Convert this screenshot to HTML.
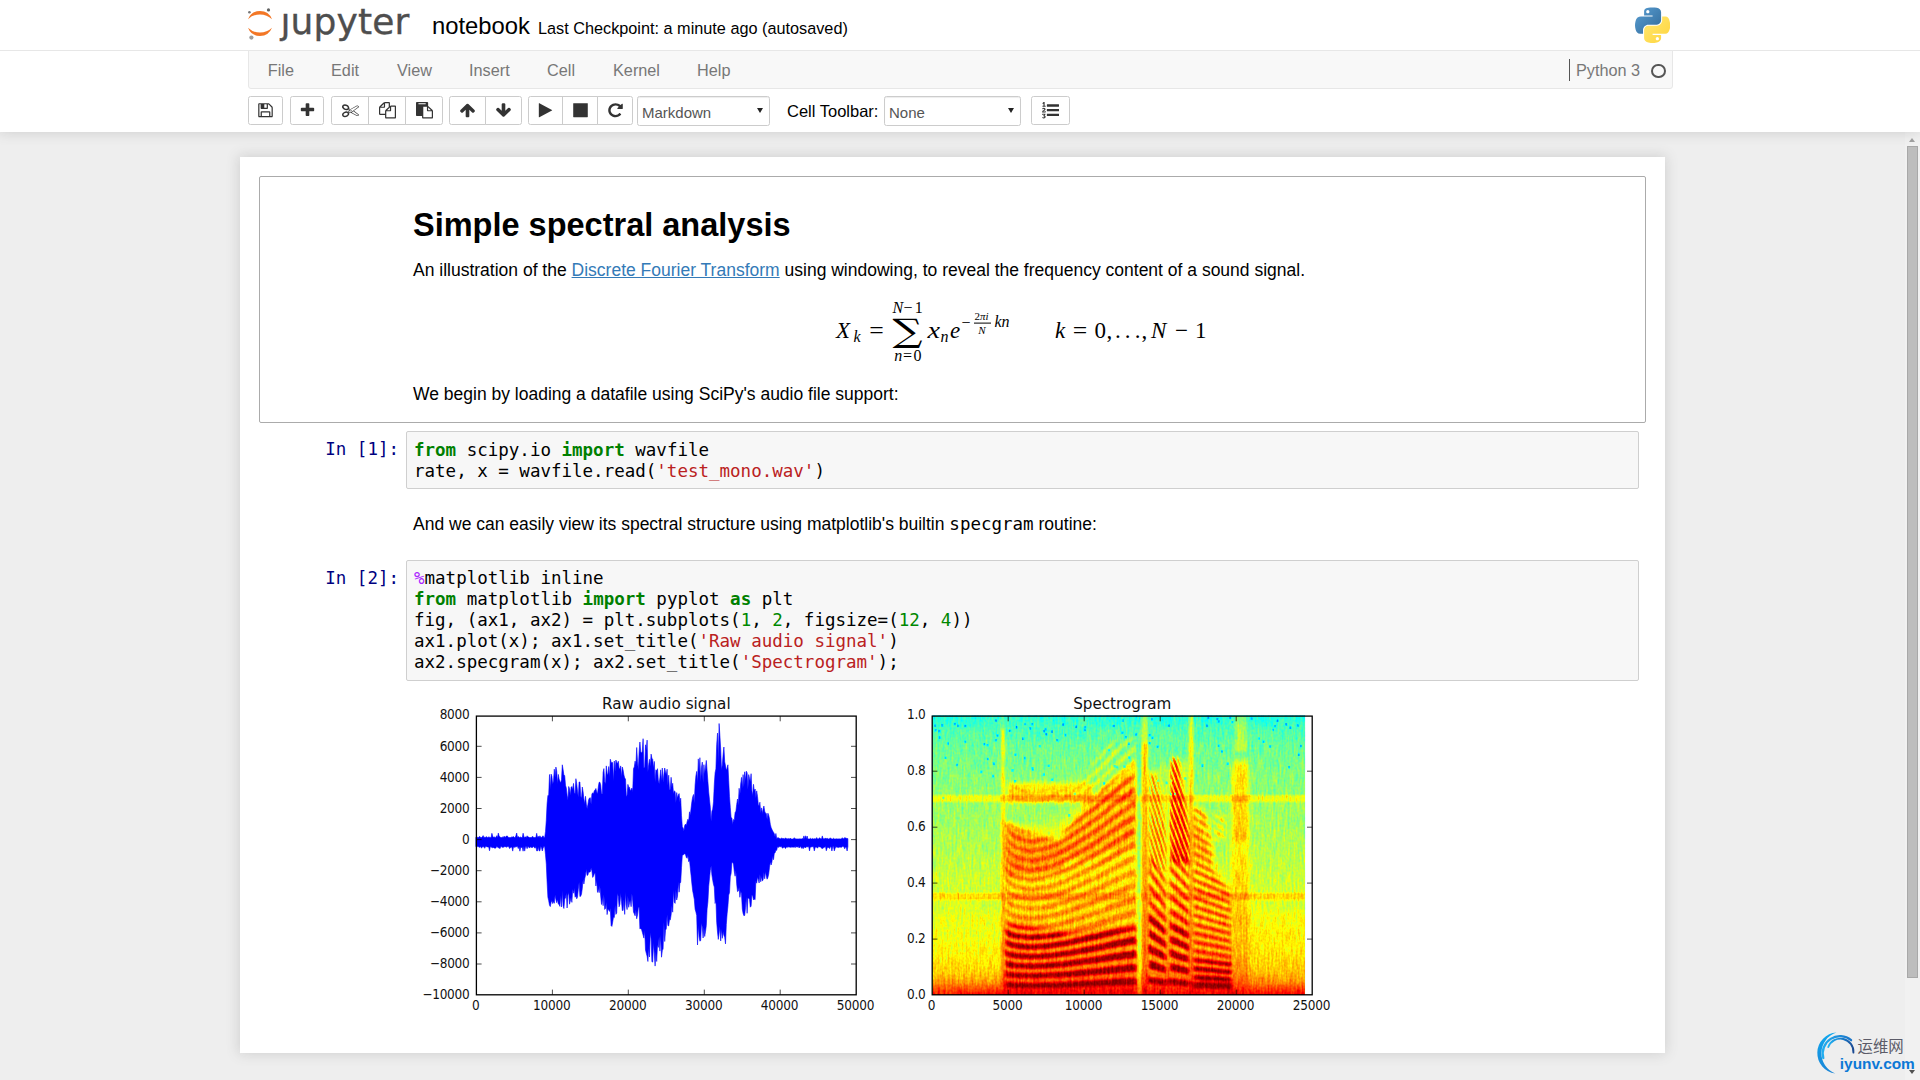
<!DOCTYPE html>
<html lang="en">
<head>
<meta charset="utf-8">
<title>notebook</title>
<style>
*{box-sizing:border-box}
html,body{margin:0;padding:0}
body{width:1920px;height:1080px;overflow:hidden;position:relative;background:#eee;font-family:"Liberation Sans",sans-serif;font-size:16.25px;color:#000}
.abs{position:absolute}
#header{position:absolute;left:0;top:0;width:1920px;height:132px;background:#fff;box-shadow:0 0 12.5px 1.25px rgba(87,87,87,.2);z-index:5}
#hline{position:absolute;left:0;top:50px;width:1920px;height:1px;background:#e7e7e7}
#menubar{position:absolute;left:248px;top:50px;width:1425px;height:38.5px;background:#f8f8f8;border:1px solid #e7e7e7;border-radius:0 0 3px 3px}
#menubar span.mi{position:absolute;top:0;line-height:38px;color:#777;font-size:16.25px;white-space:nowrap}
.tb{position:absolute;top:96px;height:29px;border:1px solid #ccc;background:#fff}
.tb svg{position:absolute;overflow:visible}
.sel{position:absolute;top:96px;height:29.5px;border:1px solid #ccc;border-radius:2.5px;background:#fff;color:#555;font-size:15px;line-height:31px;padding-left:4px;box-shadow:inset 0 1px 1px rgba(0,0,0,.075)}
.sel i{position:absolute;right:6.5px;top:11px;width:0;height:0;border-left:3.4px solid transparent;border-right:3.4px solid transparent;border-top:5.8px solid #222}
#nbname{position:absolute;left:432px;top:10px;font-size:23.8px;line-height:32px;white-space:nowrap}
#ckpt{position:absolute;left:538px;top:17px;font-size:16.25px;line-height:22px;white-space:nowrap}
#scroll{position:absolute;left:1905px;top:132px;width:15px;height:948px;background:#f1f1f1;z-index:4}
#thumb{position:absolute;left:2px;top:14px;width:11px;height:832px;background:#bdbdbd;border:1px solid #a8a8a8}
#nb{position:absolute;left:240px;top:157px;width:1425px;height:896px;background:#fff;box-shadow:0 0 12.5px 1.25px rgba(87,87,87,.2)}
#sel1{position:absolute;left:259px;top:176px;width:1387px;height:247px;border:1px solid #ababab;border-radius:2px}
.md{position:absolute;font-size:17.5px;line-height:25px;white-space:nowrap;color:#000}
.md a{color:#337ab7;text-decoration:underline}
h1.t{position:absolute;margin:0;left:413px;top:205px;font-size:32.5px;line-height:40px;font-weight:bold;white-space:nowrap}
.inp{position:absolute;left:406px;width:1233px;border:1px solid #cfcfcf;background:#f7f7f7;border-radius:2px}
pre{margin:0;font-family:"DejaVu Sans Mono","Liberation Mono",monospace;font-size:17.5px;line-height:21px;color:#000;white-space:pre}
.inp pre{position:absolute;left:7px;top:7.5px}
.prompt{position:absolute;left:259px;width:140px;text-align:right;color:#000080}
.k{color:#008000;font-weight:bold}.s{color:#ba2121}.n{color:#080}.m{color:#a2f}
code.i{font-family:"DejaVu Sans Mono","Liberation Mono",monospace;font-size:17.5px}
.math{font-family:"Liberation Serif","DejaVu Serif",serif;font-style:italic;position:absolute;white-space:nowrap;line-height:1;color:#000}
.math.r{font-style:normal}
svg text{white-space:pre}
</style>
</head>
<body>
<div id="header">
<svg class="abs" style="left:240px;top:0" width="180" height="50" viewBox="240 0 180 50">
<path fill="#f37726" d="M248 19.2A12.9 12.9 0 0 1 272 19.2A17.4 17.4 0 0 0 248 19.2Z"/>
<path fill="#f37726" d="M248 27.8A12.9 12.9 0 0 0 272 27.8A17.4 17.4 0 0 1 248 27.8Z"/>
<circle cx="249.4" cy="12.2" r="1.3" fill="#767677"/>
<circle cx="268.5" cy="9.9" r="1.6" fill="#616262"/>
<circle cx="251.4" cy="37.6" r="2.1" fill="#9e9e9e"/>
<text x="280.4" y="33.7" font-family="DejaVu Sans, Liberation Sans, sans-serif" font-size="36" letter-spacing="0.15" fill="#4e4e4e" stroke="#4e4e4e" stroke-width="0.35">jupyter</text>
<rect x="281" y="4" width="9.5" height="8.6" fill="#fff"/>
</svg>

<div id="nbname">notebook</div>
<div id="ckpt">Last Checkpoint: a minute ago (autosaved)</div>
<svg class="abs" style="left:1635.2px;top:7px" width="35.2" height="36" viewBox="0 0 111 110.5">
<defs>
<linearGradient id="pb" x1="0" y1="0" x2="1" y2="1"><stop offset="0" stop-color="#5a9fd4"/><stop offset="1" stop-color="#306998"/></linearGradient>
<linearGradient id="py" x1="1" y1="1" x2="0" y2="0"><stop offset="0" stop-color="#ffd43b"/><stop offset="1" stop-color="#ffe873"/></linearGradient>
</defs>
<path fill="url(#pb)" d="M54.92 0C50.34.02 45.96.41 42.11 1.09 30.76 3.1 28.7 7.29 28.7 15.03v10.22h26.81v3.41H18.64c-7.79 0-14.62 4.68-16.75 13.59-2.46 10.21-2.57 16.59 0 27.25 1.91 7.94 6.46 13.59 14.25 13.59h9.22v-12.25c0-8.85 7.66-16.66 16.75-16.66h26.78c7.45 0 13.41-6.14 13.41-13.63V15.03c0-7.27-6.13-12.72-13.41-13.94C64.28.33 59.5-.02 54.92 0zM40.42 8.22c2.77 0 5.03 2.3 5.03 5.12 0 2.82-2.26 5.09-5.03 5.09-2.78 0-5.03-2.28-5.03-5.09 0-2.83 2.25-5.12 5.03-5.12z"/>
<path fill="url(#py)" d="M85.64 28.66v11.91c0 9.23-7.83 17-16.75 17H42.11c-7.34 0-13.41 6.28-13.41 13.62v25.53c0 7.27 6.32 11.54 13.41 13.63 8.49 2.5 16.63 2.95 26.78 0 6.75-1.95 13.41-5.89 13.41-13.63V86.5H55.52v-3.41h40.19c7.79 0 10.7-5.44 13.41-13.59 2.8-8.4 2.68-16.48 0-27.25-1.93-7.76-5.6-13.59-13.41-13.59zM70.58 93.31c2.78 0 5.03 2.28 5.03 5.09 0 2.83-2.25 5.13-5.03 5.13-2.77 0-5.03-2.3-5.03-5.13 0-2.82 2.26-5.09 5.03-5.09z"/>
</svg>

<div id="hline"></div>
<div id="menubar">
<span class="mi" style="left:18.75px">File</span>
<span class="mi" style="left:82px">Edit</span>
<span class="mi" style="left:148px">View</span>
<span class="mi" style="left:220px">Insert</span>
<span class="mi" style="left:298px">Cell</span>
<span class="mi" style="left:364px">Kernel</span>
<span class="mi" style="left:448px">Help</span>
<div class="abs" style="left:1320px;top:8px;width:1.25px;height:22px;background:#555"></div>
<span class="mi" style="left:1327px">Python 3</span>
<div class="abs" style="left:1402px;top:12.5px;width:14.5px;height:14.5px;border:2.3px solid #555;border-radius:50%"></div>
</div>
<div class="tb" style="left:248px;width:35px;border-radius:2.5px 2.5px 2.5px 2.5px"><svg width="17" height="16.4" preserveAspectRatio="none" viewBox="0 0 1792 1792" style="left:8.00px;top:5.00px"><path fill="#333" d="M512 1536h768v-384h-768v384zm896 0h128v-896q0-14-10-38.500t-20-34.500l-281-281q-10-10-34-20t-39-10v416q0 40-28 68t-68 28h-576q-40 0-68-28t-28-68v-416h-128v1280h128v-416q0-40 28-68t68-28h832q40 0 68 28t28 68v416zm-384-928v-320q0-13-9.500-22.500t-22.500-9.500h-192q-13 0-22.500 9.500t-9.500 22.500v320q0 13 9.500 22.500t22.500 9.500h192q13 0 22.500-9.500t9.500-22.500zm640 32v928q0 40-28 68t-68 28h-1344q-40 0-68-28t-28-68v-1344q0-40 28-68t68-28h928q40 0 88 20t76 48l280 280q28 28 48 76t20 88z"/></svg></div>
<div class="tb" style="left:290px;width:34px;border-radius:2.5px 2.5px 2.5px 2.5px"><svg width="17" height="16.4" preserveAspectRatio="none" viewBox="0 0 1792 1792" style="left:7.50px;top:5.00px"><path fill="#333" d="M1600 736v192q0 40-28 68t-68 28h-416v416q0 40-28 68t-68 28h-192q-40 0-68-28t-28-68v-416h-416q-40 0-68-28t-28-68v-192q0-40 28-68t68-28h416v-416q0-40 28-68t68-28h192q40 0 68 28t28 68v416h416q40 0 68 28t28 68z"/></svg></div>
<div class="tb" style="left:331px;width:38px;border-radius:2.5px 0.0px 0.0px 2.5px"><svg width="17" height="16.4" preserveAspectRatio="none" viewBox="0 0 1792 1792" style="left:9.50px;top:5.00px"><path fill="#333" d="M960 896q26 0 45 19t19 45-19 45-45 19-45-19-19-45 19-45 45-19zm300 64l507 398q28 20 25 56-5 35-35 51l-128 64q-13 7-29 7-17 0-31-8l-690-387-110 66q-8 4-12 5 14 49 10 97-7 77-56 147.500t-132 123.500q-132 84-277 84-136 0-222-78-90-84-79-207 7-76 56-147t131-124q132-84 278-84 83 0 151 31 9-13 22-22l122-73-122-73q-13-9-22-22-68 31-151 31-146 0-278-84-82-53-131-124t-56-147q-5-59 15.500-113t63.500-93q85-79 222-79 145 0 277 84 83 52 132 123t56 148q4 48-10 97 4 1 12 5l110 66 690-387q14-8 31-8 16 0 29 7l128 64q30 16 35 51 3 36-25 56zm-681-260q46-42 21-108t-106-117q-92-59-192-59-74 0-113 36-46 42-21 108t106 117q92 59 192 59 74 0 113-36zm-85 745q81-51 106-117t-21-108q-39-36-113-36-100 0-192 59-81 51-106 117t21 108q39 36 113 36 100 0 192-59zm178-613l96 58v-11q0-36 33-56l14-8-79-47-26 26q-3 3-10 11t-12 12q-2 2-4 3.500t-3 2.500zm224 224l96 32 736-576-128-64-768 431v113l-160 96 9 8q2 2 7 6 4 4 11 12t11 12l26 26zm704 416l128-64-520-408-177 138q-2 3-13 7z"/></svg></div>
<div class="tb" style="left:368px;width:38px;border-radius:0.0px 0.0px 0.0px 0.0px"><svg width="17" height="16.4" preserveAspectRatio="none" viewBox="0 0 1792 1792" style="left:9.50px;top:5.00px"><path fill="#333" d="M1696 384q40 0 68 28t28 68v1216q0 40-28 68t-68 28h-960q-40 0-68-28t-28-68v-288h-544q-40 0-68-28t-28-68v-672q0-40 20-88t48-76l408-408q28-28 76-48t88-20h416q40 0 68 28t28 68v328q68-40 128-40h416zm-544 213l-299 299h299v-299zm-640-384l-299 299h299v-299zm196 647l316-316v-416h-384v416q0 40-28 68t-68 28h-416v640h512v-256q0-40 20-88t48-76zm956 804v-1152h-384v416q0 40-28 68t-68 28h-416v640h896z"/></svg></div>
<div class="tb" style="left:405px;width:38px;border-radius:0.0px 2.5px 2.5px 0.0px"><svg width="17" height="16.4" preserveAspectRatio="none" viewBox="0 0 1792 1792" style="left:9.50px;top:5.00px"><path fill="#333" d="M768 1664h896v-640h-416q-40 0-68-28t-28-68v-416h-384v1152zm256-1440v-64q0-13-9.500-22.500t-22.500-9.500h-704q-13 0-22.500 9.500t-9.500 22.500v64q0 13 9.500 22.500t22.500 9.500h704q13 0 22.500-9.500t9.500-22.500zm256 672h299l-299-299v299zm512 128v672q0 40-28 68t-68 28h-960q-40 0-68-28t-28-68v-160h-544q-40 0-68-28t-28-68v-1344q0-40 28-68t68-28h1088q40 0 68 28t28 68v328q21 13 36 28l408 408q28 28 48 76t20 88z"/></svg></div>
<div class="tb" style="left:449px;width:37px;border-radius:2.5px 0.0px 0.0px 2.5px"><svg width="17" height="16.4" preserveAspectRatio="none" viewBox="0 0 1792 1792" style="left:9.00px;top:5.00px"><path fill="#333" d="M1675 971q0 51-37 90l-75 75q-38 38-91 38-54 0-90-38l-294-293v704q0 52-37.500 84.500t-90.500 32.500h-128q-53 0-90.500-32.500t-37.500-84.500v-704l-294 293q-36 38-90 38t-90-38l-75-75q-38-38-38-90 0-53 38-91l651-651q35-37 90-37 54 0 91 37l651 651q37 39 37 91z"/></svg></div>
<div class="tb" style="left:485px;width:37px;border-radius:0.0px 2.5px 2.5px 0.0px"><svg width="17" height="16.4" preserveAspectRatio="none" viewBox="0 0 1792 1792" style="left:9.00px;top:5.00px"><path fill="#333" d="M1675 832q0 53-37 90l-651 652q-39 37-91 37-53 0-90-37l-651-652q-38-36-38-90 0-53 38-91l74-75q39-37 91-37 53 0 90 37l294 294v-704q0-52 38-90t90-38h128q52 0 90 38t38 90v704l294-294q37-37 90-37 52 0 91 37l75 75q37 39 37 91z"/></svg></div>
<div class="tb" style="left:528px;width:35px;border-radius:2.5px 0.0px 0.0px 2.5px"><svg width="17" height="16.4" preserveAspectRatio="none" viewBox="0 0 1792 1792" style="left:8.00px;top:5.00px"><path fill="#333" d="M1576 927l-1328 738q-23 13-39.500 3t-16.500-36v-1472q0-26 16.500-36t39.500 3l1328 738q23 13 23 31t-23 31z"/></svg></div>
<div class="tb" style="left:562px;width:36px;border-radius:0.0px 0.0px 0.0px 0.0px"><svg width="17" height="16.4" preserveAspectRatio="none" viewBox="0 0 1792 1792" style="left:8.50px;top:5.00px"><path fill="#333" d="M1664 192v1408q0 26-19 45t-45 19h-1408q-26 0-45-19t-19-45v-1408q0-26 19-45t45-19h1408q26 0 45 19t19 45z"/></svg></div>
<div class="tb" style="left:597px;width:36px;border-radius:0.0px 2.5px 2.5px 0.0px"><svg width="17" height="16.4" preserveAspectRatio="none" viewBox="0 0 1792 1792" style="left:8.50px;top:5.00px"><path fill="#333" d="M1664 256v448q0 26-19 45t-45 19h-448q-42 0-59-40-17-39 14-69l138-138q-148-137-349-137-104 0-198.500 40.500t-163.500 109.500-109.500 163.500-40.500 198.500 40.500 198.500 109.500 163.500 163.500 109.500 198.500 40.500q119 0 225-52t179-147q7-10 23-12 14 0 25 9l137 138q9 8 9.500 20.500t-7.500 22.500q-109 132-264 204.500t-327 72.500q-156 0-298-61t-245-164-164-245-61-298 61-298 164-245 245-164 298-61q147 0 284.500 55.500t244.500 156.500l130-129q29-31 70-14 39 17 39 59z"/></svg></div>
<div class="tb" style="left:1031px;width:39px;border-radius:2.5px 2.5px 2.5px 2.5px"><svg width="17" height="16.4" preserveAspectRatio="none" viewBox="0 0 1792 1792" style="left:10.00px;top:5.00px"><path fill="#333" d="M381 1620q0 80-54.500 126t-135.500 46q-106 0-172-66l57-88q49 45 106 45 29 0 50.500-14.500t21.500-42.500q0-64-105-56l-26-56q8-10 32.500-43.500t42.500-54 37-38.500v-1q-16 0-48.500 1t-48.500 1v53h-106v-152h333v88l-95 115q51 12 81 49t30 88zm2-627v159h-362q-6-36-6-54 0-51 23.500-93t56.500-68 66-47.500 56.500-43.500 23.500-45q0-25-14.500-38.500t-39.500-13.500q-46 0-81 58l-85-59q24-51 71.500-79.500t105.500-28.500q73 0 123 41.500t50 112.500q0 50-34 91.500t-75 64.500-75.500 50.500-35.500 52.500h127v-60h105zm1409 319v192q0 13-9.500 22.500t-22.500 9.500h-1216q-13 0-22.500-9.500t-9.500-22.500v-192q0-14 9-23t23-9h1216q13 0 22.500 9.500t9.500 22.500zm-1408-899v99h-335v-99h107q0-41 .5-121.500t.5-121.500v-12h-2q-8 17-50 54l-71-76 136-127h106v404h108zm1408 387v192q0 13-9.500 22.500t-22.500 9.500h-1216q-13 0-22.500-9.500t-9.500-22.500v-192q0-14 9-23t23-9h1216q13 0 22.500 9.500t9.500 22.500zm0-512v192q0 13-9.500 22.500t-22.500 9.500h-1216q-13 0-22.500-9.500t-9.500-22.500v-192q0-13 9.500-22.500t22.500-9.500h1216q13 0 22.500 9.500t9.500 22.500z"/></svg></div>

<div class="sel" style="left:637px;width:133px">Markdown<i></i></div>
<div class="abs" style="left:787px;top:99.4px;font-size:16.5px;line-height:24px;white-space:nowrap">Cell Toolbar:</div>
<div class="sel" style="left:884px;width:137px">None<i></i></div>
</div>
<div id="scroll">
<div class="abs" style="left:4px;top:6px;width:0;height:0;border-left:3.5px solid transparent;border-right:3.5px solid transparent;border-bottom:4px solid #a0a0a0"></div>
<div id="thumb"></div>
<div class="abs" style="left:4px;top:938px;width:0;height:0;border-left:3.5px solid transparent;border-right:3.5px solid transparent;border-top:4px solid #505050"></div>
</div>
<div id="nb"></div>
<div id="sel1"></div>
<h1 class="t">Simple spectral analysis</h1>
<div class="md" style="left:413px;top:258px">An illustration of the <a>Discrete Fourier Transform</a> using windowing, to reveal the frequency content of a sound signal.</div>
<svg class="abs" style="left:820px;top:290px" width="410" height="85" viewBox="820 290 410 85" font-family="Liberation Serif, DejaVu Serif, serif" fill="#000">
<g font-style="italic" font-size="23">
<text x="836" y="338">X</text>
<text x="927.5" y="338" textLength="12.5" lengthAdjust="spacingAndGlyphs">x</text>
<text x="950" y="338">e</text>
<text x="1055" y="338">k</text>
<text x="1151" y="338">N</text>
</g>
<g font-style="italic" font-size="16">
<text x="853.5" y="341.5">k</text>
<text x="940.5" y="341.8">n</text>
<text x="892.5" y="312.6">N</text>
<text x="894.3" y="360.5">n</text>
<text x="994.5" y="327.4">kn</text>
</g>
<g font-size="16">
<text x="903.5" y="312.6">−</text>
<text x="914.8" y="312.6">1</text>
<text x="903" y="360.5">=</text>
<text x="913.6" y="360.5">0</text>
<text x="961.5" y="327.8">−</text>
</g>
<g font-size="11">
<text x="974.6" y="320">2</text>
<text x="980" y="320" font-style="italic">πi</text>
<text x="978.2" y="333.8" font-style="italic">N</text>
</g>
<rect x="974" y="322.6" width="17" height="1" />
<text x="892.6" y="342.3" font-size="32.4" font-family="DejaVu Serif, Liberation Serif, serif" textLength="30" lengthAdjust="spacingAndGlyphs">∑</text>
<g font-size="23">
<text x="869.3" y="338" textLength="14.5" lengthAdjust="spacingAndGlyphs">=</text>
<text x="1072.8" y="338" textLength="14.5" lengthAdjust="spacingAndGlyphs">=</text>
<text x="1094.5" y="338">0</text>
<text x="1106.5" y="338">,</text>
<text x="1115" y="338" letter-spacing="4.1">...</text>
<text x="1141.5" y="338">,</text>
<text x="1175" y="338">−</text>
<text x="1195" y="338">1</text>
</g>
</svg>

<div class="md" style="left:413px;top:382px">We begin by loading a datafile using SciPy's audio file support:</div>

<pre class="prompt" style="top:439px">In [1]:</pre>
<div class="inp" style="top:431px;height:58px"><pre><span class="k">from</span> scipy.io <span class="k">import</span> wavfile
rate, x = wavfile.read(<span class="s">'test_mono.wav'</span>)</pre></div>

<div class="md" style="left:413px;top:512px">And we can easily view its spectral structure using matplotlib's builtin <code class="i">specgram</code> routine:</div>

<pre class="prompt" style="top:568px">In [2]:</pre>
<div class="inp" style="top:560px;height:121px"><pre style="top:6.6px"><span class="m">%</span>matplotlib inline
<span class="k">from</span> matplotlib <span class="k">import</span> pyplot <span class="k">as</span> plt
fig, (ax1, ax2) = plt.subplots(<span class="n">1</span>, <span class="n">2</span>, figsize=(<span class="n">12</span>, <span class="n">4</span>))
ax1.plot(x); ax1.set_title(<span class="s">'Raw audio signal'</span>)
ax2.specgram(x); ax2.set_title(<span class="s">'Spectrogram'</span>);</pre></div>
<svg class="abs" style="left:410px;top:688px" width="950" height="335" viewBox="410 688 950 335" font-family="DejaVu Sans, Liberation Sans, sans-serif" font-size="12.5" fill="#111">
<path fill="#0000ff" stroke="#0000ff" stroke-width="0.6" stroke-linejoin="round" d="M475.9 837.6L476.7 836.4L477.5 837.6L478.3 837.6L479.1 836.7L479.9 836.5L480.7 837.6L481.5 837.6L482.3 837.1L483.1 835.6L483.9 837.6L484.7 837.2L485.5 837.6L486.3 836.5L487.1 837.4L487.9 837.5L488.7 836.9L489.5 837.2L490.3 837.6L491.1 837.4L491.9 833.3L492.7 836.3L493.5 837.3L494.3 836.9L495.1 837.6L495.9 837.4L496.7 835.7L497.5 837.6L498.3 833.1L499.1 836.0L499.9 836.8L500.7 837.5L501.5 837.6L502.3 837.6L503.1 836.5L503.9 837.4L504.7 836.3L505.5 837.6L506.3 836.1L507.1 835.9L507.9 836.6L508.7 837.6L509.5 837.6L510.3 837.6L511.1 837.6L511.9 836.6L512.7 837.3L513.5 836.5L514.3 837.6L515.1 837.5L515.9 835.7L516.7 833.0L517.5 837.6L518.3 836.4L519.1 837.2L519.9 837.6L520.7 837.0L521.5 837.6L522.3 837.5L523.1 833.2L523.9 836.5L524.7 837.6L525.5 836.8L526.3 837.6L527.1 835.8L527.9 837.1L528.7 837.0L529.5 837.6L530.3 837.6L531.1 837.2L531.9 837.5L532.7 836.2L533.5 837.6L534.3 837.5L535.1 837.6L535.9 837.3L536.7 833.3L537.5 837.6L538.3 836.3L539.1 837.6L539.9 835.8L540.7 837.3L541.5 837.6L542.3 836.4L543.1 835.8L543.9 837.6L544.7 837.6L545.5 831.4L546.3 820.2L547.1 803.6L547.9 795.4L548.7 795.5L549.5 774.5L550.3 789.3L551.1 774.1L551.9 776.4L552.7 784.3L553.5 780.9L554.3 769.2L555.1 777.5L555.9 767.0L556.7 770.9L557.5 783.7L558.3 774.4L559.1 779.1L559.9 781.3L560.7 783.1L561.5 779.6L562.3 764.8L563.1 769.6L563.9 775.2L564.7 775.6L565.5 785.3L566.3 788.1L567.1 795.2L567.9 799.9L568.7 786.5L569.5 788.7L570.3 795.5L571.1 787.3L571.9 786.5L572.7 790.0L573.5 783.4L574.3 792.6L575.1 793.7L575.9 778.7L576.7 783.7L577.5 791.1L578.3 797.6L579.1 782.0L579.9 782.0L580.7 796.0L581.5 798.3L582.3 787.0L583.1 791.8L583.9 799.0L584.7 803.9L585.5 796.3L586.3 804.1L587.1 808.8L587.9 804.4L588.7 799.6L589.5 798.0L590.3 797.7L591.1 804.4L591.9 794.0L592.7 792.8L593.5 793.7L594.3 790.7L595.1 790.0L595.9 788.5L596.7 792.0L597.5 793.9L598.3 787.0L599.1 782.3L599.9 782.2L600.7 784.9L601.5 793.8L602.3 794.0L603.1 772.4L603.9 768.6L604.7 781.8L605.5 783.7L606.3 765.9L607.1 773.2L607.9 775.3L608.7 766.5L609.5 777.3L610.3 759.2L611.1 762.0L611.9 763.1L612.7 762.4L613.5 781.6L614.3 761.0L615.1 771.5L615.9 760.0L616.7 762.6L617.5 763.6L618.3 761.2L619.1 768.0L619.9 769.3L620.7 765.9L621.5 777.3L622.3 767.0L623.1 770.1L623.9 774.9L624.7 778.1L625.5 779.0L626.3 796.5L627.1 795.3L627.9 784.4L628.7 787.6L629.5 787.2L630.3 790.7L631.1 789.7L631.9 788.1L632.7 791.7L633.5 768.6L634.3 766.9L635.1 761.1L635.9 765.1L636.7 747.5L637.5 761.5L638.3 769.9L639.1 752.4L639.9 742.0L640.7 751.6L641.5 753.2L642.3 751.2L643.1 738.7L643.9 767.9L644.7 767.1L645.5 744.8L646.3 750.5L647.1 740.1L647.9 771.7L648.7 764.7L649.5 759.3L650.3 766.4L651.1 754.1L651.9 758.3L652.7 759.2L653.5 768.2L654.3 761.4L655.1 782.1L655.9 769.8L656.7 771.1L657.5 768.7L658.3 780.1L659.1 784.0L659.9 777.7L660.7 769.8L661.5 781.7L662.3 768.0L663.1 782.5L663.9 774.2L664.7 768.0L665.5 771.7L666.3 774.9L667.1 769.2L667.9 785.2L668.7 775.2L669.5 789.7L670.3 789.2L671.1 777.3L671.9 787.2L672.7 783.3L673.5 793.7L674.3 790.9L675.1 791.5L675.9 802.8L676.7 792.6L677.5 798.1L678.3 795.2L679.1 793.6L679.9 801.9L680.7 798.2L681.5 815.7L682.3 826.8L683.1 827.9L683.9 831.0L684.7 825.5L685.5 824.1L686.3 825.6L687.1 821.7L687.9 819.2L688.7 820.9L689.5 811.8L690.3 815.3L691.1 808.1L691.9 801.4L692.7 796.9L693.5 794.5L694.3 803.5L695.1 784.9L695.9 776.0L696.7 771.4L697.5 782.9L698.3 758.9L699.1 771.4L699.9 757.7L700.7 782.0L701.5 767.4L702.3 762.1L703.1 782.9L703.9 764.7L704.7 774.1L705.5 767.2L706.3 760.4L707.1 770.9L707.9 781.5L708.7 792.0L709.5 799.8L710.3 807.2L711.1 821.4L711.9 811.3L712.7 809.2L713.5 801.8L714.3 784.2L715.1 772.7L715.9 768.9L716.7 744.8L717.5 733.1L718.3 762.4L719.1 723.5L719.9 735.6L720.7 749.3L721.5 769.7L722.3 765.1L723.1 754.8L723.9 747.0L724.7 761.8L725.5 765.8L726.3 770.3L727.1 768.2L727.9 764.8L728.7 780.5L729.5 796.6L730.3 807.6L731.1 817.6L731.9 818.0L732.7 824.4L733.5 819.5L734.3 820.2L735.1 812.5L735.9 811.2L736.7 804.4L737.5 799.0L738.3 805.5L739.1 788.3L739.9 795.4L740.7 784.0L741.5 777.4L742.3 788.5L743.1 774.6L743.9 787.3L744.7 771.8L745.5 780.7L746.3 771.2L747.1 772.7L747.9 789.5L748.7 774.6L749.5 778.5L750.3 781.8L751.1 773.7L751.9 790.7L752.7 795.9L753.5 784.3L754.3 791.1L755.1 789.0L755.9 798.0L756.7 790.9L757.5 796.4L758.3 804.4L759.1 805.9L759.9 802.2L760.7 812.9L761.5 807.9L762.3 813.7L763.1 808.9L763.9 806.0L764.7 811.2L765.5 813.3L766.3 813.4L767.1 819.4L767.9 813.2L768.7 815.2L769.5 818.8L770.3 824.3L771.1 827.4L771.9 829.3L772.7 831.1L773.5 832.2L774.3 833.8L775.1 837.1L775.9 833.5L776.7 838.4L777.5 837.9L778.3 837.6L779.1 838.6L779.9 838.4L780.7 839.0L781.5 837.9L782.3 838.4L783.1 838.6L783.9 838.6L784.7 839.0L785.5 837.8L786.3 838.7L787.1 838.6L787.9 839.0L788.7 838.5L789.5 838.9L790.3 838.1L791.1 839.0L791.9 839.0L792.7 839.0L793.5 838.8L794.3 837.7L795.1 839.0L795.9 838.7L796.7 839.0L797.5 838.9L798.3 838.9L799.1 839.0L799.9 838.8L800.7 838.9L801.5 838.9L802.3 838.5L803.1 838.9L803.9 835.9L804.7 838.9L805.5 835.8L806.3 839.0L807.1 836.0L807.9 839.0L808.7 839.0L809.5 839.0L810.3 838.3L811.1 838.9L811.9 838.9L812.7 838.4L813.5 839.0L814.3 838.7L815.1 838.8L815.9 839.0L816.7 837.6L817.5 838.9L818.3 838.9L819.1 838.3L819.9 837.8L820.7 838.9L821.5 839.0L822.3 835.9L823.1 838.8L823.9 838.7L824.7 838.8L825.5 837.9L826.3 838.8L827.1 838.2L827.9 838.7L828.7 839.0L829.5 838.7L830.3 837.8L831.1 838.7L831.9 838.9L832.7 839.0L833.5 838.3L834.3 838.9L835.1 838.9L835.9 838.9L836.7 838.8L837.5 838.9L838.3 838.9L839.1 838.8L839.9 839.0L840.7 838.9L841.5 838.8L842.3 837.7L843.1 838.8L843.9 838.7L844.7 837.6L845.5 838.0L846.3 838.3L847.1 838.5L847.9 838.6L847.9 846.6L847.1 851.0L846.3 847.2L845.5 846.9L844.7 848.8L843.9 846.7L843.1 846.6L842.3 846.6L841.5 847.3L840.7 847.2L839.9 847.1L839.1 847.3L838.3 847.6L837.5 847.3L836.7 847.2L835.9 846.6L835.1 848.4L834.3 850.9L833.5 846.6L832.7 846.7L831.9 851.0L831.1 847.1L830.3 846.7L829.5 848.6L828.7 847.8L827.9 847.0L827.1 848.3L826.3 850.8L825.5 846.6L824.7 847.0L823.9 847.5L823.1 848.3L822.3 848.5L821.5 848.2L820.7 846.9L819.9 846.9L819.1 846.7L818.3 846.8L817.5 848.2L816.7 847.2L815.9 846.9L815.1 847.7L814.3 850.9L813.5 846.7L812.7 846.7L811.9 846.8L811.1 847.0L810.3 847.0L809.5 850.9L808.7 846.7L807.9 846.8L807.1 846.9L806.3 846.8L805.5 847.9L804.7 847.0L803.9 847.5L803.1 848.7L802.3 847.6L801.5 848.3L800.7 846.6L799.9 847.1L799.1 848.0L798.3 846.6L797.5 847.0L796.7 846.9L795.9 846.6L795.1 847.7L794.3 846.7L793.5 847.2L792.7 847.0L791.9 847.4L791.1 846.7L790.3 847.4L789.5 847.1L788.7 846.8L787.9 847.5L787.1 846.8L786.3 847.2L785.5 848.6L784.7 847.6L783.9 846.7L783.1 848.1L782.3 848.1L781.5 846.6L780.7 846.7L779.9 846.8L779.1 846.6L778.3 847.5L777.5 846.7L776.7 850.3L775.9 850.3L775.1 852.8L774.3 853.2L773.5 859.7L772.7 856.3L771.9 862.2L771.1 865.0L770.3 861.7L769.5 867.3L768.7 874.1L767.9 877.4L767.1 879.2L766.3 876.3L765.5 871.4L764.7 878.8L763.9 872.3L763.1 879.7L762.3 881.1L761.5 876.6L760.7 881.8L759.9 874.2L759.1 883.0L758.3 879.2L757.5 877.3L756.7 883.2L755.9 880.7L755.1 899.7L754.3 899.0L753.5 899.9L752.7 896.1L751.9 894.7L751.1 906.2L750.3 907.2L749.5 899.3L748.7 898.2L747.9 897.8L747.1 913.3L746.3 896.8L745.5 907.6L744.7 915.4L743.9 915.7L743.1 913.4L742.3 909.0L741.5 893.8L740.7 890.9L739.9 897.3L739.1 887.4L738.3 891.1L737.5 891.6L736.7 883.9L735.9 870.6L735.1 876.2L734.3 871.7L733.5 864.0L732.7 862.4L731.9 862.4L731.1 873.4L730.3 876.8L729.5 892.7L728.7 895.1L727.9 906.4L727.1 913.9L726.3 924.4L725.5 943.9L724.7 937.3L723.9 935.3L723.1 931.4L722.3 938.3L721.5 928.7L720.7 941.0L719.9 926.7L719.1 933.3L718.3 939.4L717.5 932.0L716.7 922.2L715.9 899.3L715.1 903.5L714.3 887.0L713.5 884.5L712.7 880.1L711.9 875.0L711.1 865.7L710.3 870.6L709.5 878.1L708.7 886.4L707.9 902.1L707.1 908.9L706.3 925.6L705.5 931.5L704.7 936.5L703.9 927.5L703.1 938.0L702.3 927.2L701.5 922.7L700.7 940.5L699.9 941.2L699.1 936.7L698.3 925.4L697.5 945.0L696.7 915.5L695.9 911.9L695.1 909.2L694.3 899.4L693.5 895.1L692.7 890.9L691.9 883.9L691.1 875.7L690.3 868.2L689.5 859.9L688.7 861.7L687.9 855.2L687.1 858.3L686.3 857.4L685.5 854.5L684.7 853.8L683.9 854.6L683.1 854.8L682.3 855.4L681.5 867.6L680.7 882.4L679.9 882.9L679.1 892.2L678.3 881.4L677.5 896.2L676.7 900.0L675.9 890.1L675.1 903.4L674.3 901.9L673.5 890.0L672.7 912.2L671.9 906.1L671.1 915.1L670.3 919.9L669.5 919.6L668.7 925.9L667.9 925.6L667.1 914.8L666.3 928.7L665.5 930.3L664.7 941.5L663.9 922.1L663.1 948.8L662.3 950.6L661.5 957.2L660.7 934.8L659.9 951.1L659.1 936.8L658.3 947.4L657.5 944.7L656.7 961.5L655.9 951.9L655.1 966.1L654.3 953.9L653.5 942.3L652.7 962.1L651.9 961.7L651.1 938.8L650.3 932.6L649.5 957.0L648.7 948.2L647.9 961.5L647.1 956.2L646.3 953.3L645.5 950.0L644.7 930.5L643.9 938.1L643.1 935.1L642.3 932.2L641.5 929.2L640.7 928.6L639.9 928.9L639.1 907.2L638.3 907.8L637.5 914.9L636.7 918.8L635.9 910.1L635.1 915.8L634.3 913.8L633.5 912.1L632.7 901.0L631.9 893.6L631.1 906.7L630.3 899.9L629.5 902.8L628.7 907.3L627.9 896.0L627.1 909.6L626.3 905.0L625.5 892.1L624.7 914.4L623.9 899.7L623.1 910.4L622.3 910.5L621.5 901.5L620.7 893.2L619.9 904.2L619.1 906.8L618.3 896.5L617.5 893.2L616.7 912.8L615.9 914.4L615.1 904.9L614.3 917.6L613.5 916.9L612.7 922.0L611.9 926.4L611.1 925.6L610.3 908.2L609.5 911.4L608.7 909.9L607.9 908.7L607.1 914.6L606.3 902.3L605.5 908.4L604.7 909.4L603.9 894.5L603.1 905.7L602.3 897.2L601.5 904.5L600.7 896.0L599.9 885.7L599.1 892.7L598.3 888.2L597.5 892.4L596.7 880.0L595.9 886.0L595.1 872.9L594.3 873.7L593.5 876.0L592.7 877.4L591.9 870.9L591.1 868.1L590.3 871.8L589.5 872.2L588.7 871.7L587.9 875.0L587.1 875.5L586.3 869.3L585.5 875.3L584.7 878.7L583.9 884.0L583.1 879.2L582.3 888.2L581.5 894.1L580.7 896.2L579.9 896.5L579.1 882.2L578.3 889.2L577.5 897.1L576.7 898.8L575.9 895.4L575.1 897.2L574.3 888.3L573.5 893.2L572.7 888.9L571.9 902.4L571.1 897.2L570.3 901.2L569.5 904.2L568.7 892.4L567.9 895.3L567.1 908.0L566.3 893.1L565.5 898.0L564.7 898.9L563.9 908.5L563.1 905.8L562.3 890.8L561.5 906.9L560.7 895.6L559.9 906.4L559.1 904.2L558.3 904.1L557.5 899.4L556.7 902.7L555.9 899.5L555.1 895.0L554.3 903.3L553.5 901.4L552.7 903.6L551.9 900.4L551.1 902.5L550.3 906.6L549.5 905.3L548.7 900.7L547.9 897.2L547.1 882.2L546.3 864.1L545.5 854.7L544.7 846.8L543.9 846.6L543.1 848.1L542.3 851.0L541.5 847.7L540.7 846.6L539.9 850.8L539.1 850.9L538.3 846.7L537.5 850.9L536.7 850.9L535.9 846.6L535.1 848.2L534.3 847.5L533.5 846.6L532.7 847.5L531.9 847.3L531.1 847.6L530.3 846.7L529.5 848.1L528.7 846.9L527.9 846.6L527.1 848.7L526.3 846.6L525.5 846.7L524.7 851.1L523.9 846.6L523.1 851.2L522.3 847.4L521.5 847.4L520.7 847.4L519.9 851.2L519.1 846.7L518.3 848.6L517.5 846.6L516.7 846.6L515.9 847.2L515.1 846.6L514.3 847.5L513.5 846.7L512.7 851.1L511.9 847.0L511.1 847.3L510.3 847.8L509.5 848.5L508.7 846.6L507.9 846.7L507.1 846.6L506.3 847.3L505.5 846.7L504.7 846.6L503.9 847.4L503.1 846.7L502.3 847.6L501.5 846.6L500.7 846.8L499.9 848.7L499.1 847.8L498.3 847.8L497.5 847.0L496.7 846.6L495.9 847.9L495.1 848.3L494.3 848.0L493.5 847.4L492.7 848.0L491.9 846.8L491.1 847.4L490.3 846.6L489.5 850.8L488.7 847.0L487.9 846.9L487.1 846.9L486.3 846.6L485.5 846.6L484.7 848.3L483.9 846.6L483.1 847.0L482.3 846.8L481.5 848.2L480.7 846.6L479.9 847.2L479.1 847.2L478.3 846.6L477.5 846.6L476.7 846.6L475.9 846.6Z"/>
<defs>
<filter id="jet" filterUnits="userSpaceOnUse" x="932.2" y="715.2" width="373.0" height="279.9" color-interpolation-filters="sRGB">
<feTurbulence type="fractalNoise" baseFrequency="0.5 0.07" numOctaves="2" seed="11" result="n"/>
<feColorMatrix in="n" type="matrix" values="1 0 0 0 0 1 0 0 0 0 1 0 0 0 0 0 0 0 0 1" result="ng"/>
<feTurbulence type="fractalNoise" baseFrequency="0.5 0.4" numOctaves="1" seed="3" result="m"/>
<feColorMatrix in="m" type="matrix" values="0 1 0 0 0 0 1 0 0 0 0 1 0 0 0 0 0 0 0 1" result="mg"/>
<feComposite in="ng" in2="mg" operator="arithmetic" k1="0" k2="0.6" k3="0.4" k4="0" result="nn"/>
<feComposite in="SourceGraphic" in2="nn" operator="arithmetic" k1="0" k2="1" k3="0.24" k4="-0.12" result="s"/>
<feComponentTransfer in="s">
<feFuncR type="table" tableValues="0 0 0 0 .5 1 1 1 .5"/>
<feFuncG type="table" tableValues="0 0 .5 1 1 1 .5 0 0"/>
<feFuncB type="table" tableValues=".5 1 1 1 .5 0 0 0 0"/>
</feComponentTransfer>
</filter>
<filter id="b4" x="-20%" y="-20%" width="140%" height="140%"><feGaussianBlur stdDeviation="4"/></filter>
<filter id="b2" x="-20%" y="-20%" width="140%" height="140%"><feGaussianBlur stdDeviation="2"/></filter>
<filter id="b05" x="-5%" y="-5%" width="110%" height="110%"><feGaussianBlur stdDeviation="0.6"/></filter>
<filter id="b1" x="-5%" y="-5%" width="110%" height="110%"><feGaussianBlur stdDeviation="1.25"/></filter>
<linearGradient id="sb" gradientUnits="userSpaceOnUse" x1="0" y1="995.1" x2="0" y2="715.2"><stop offset="0" stop-color="#dedede"/><stop offset="0.02" stop-color="#cfcfcf"/><stop offset="0.045" stop-color="#bababa"/><stop offset="0.08" stop-color="#ababab"/><stop offset="0.14" stop-color="#a2a2a2"/><stop offset="0.2" stop-color="#9d9d9d"/><stop offset="0.3" stop-color="#989898"/><stop offset="0.335" stop-color="#969696"/><stop offset="0.345" stop-color="#a8a8a8"/><stop offset="0.36" stop-color="#a8a8a8"/><stop offset="0.37" stop-color="#949494"/><stop offset="0.4" stop-color="#939393"/><stop offset="0.5" stop-color="#8e8e8e"/><stop offset="0.6" stop-color="#898989"/><stop offset="0.685" stop-color="#868686"/><stop offset="0.695" stop-color="#9c9c9c"/><stop offset="0.71" stop-color="#9c9c9c"/><stop offset="0.72" stop-color="#838383"/><stop offset="0.8" stop-color="#808080"/><stop offset="0.9" stop-color="#797979"/><stop offset="0.96" stop-color="#717171"/><stop offset="1.0" stop-color="#676767"/></linearGradient>
<clipPath id="sc"><rect x="932.2" y="715.2" width="373.0" height="279.9"/></clipPath>
<mask id="sm" maskUnits="userSpaceOnUse" x="932.2" y="715.2" width="373.0" height="279.9"><g filter="url(#b2)"><path fill="#e6e6e6"  d="M1004.4 995.1L1004.4 919.5L1023.4 925.1L1069.0 932.1L1107.0 929.3L1136.6 925.1L1137.4 995.1 Z"/><path fill="#4a4a4a"  d="M1004.4 925.1L1004.4 877.5L1046.2 883.1L1076.6 866.3L1136.6 855.2L1136.6 927.9L1069.0 934.9L1023.4 927.9 Z"/><path fill="#5c5c5c"  d="M1004.4 883.1L1004.4 818.8L1017.3 830.0L1038.6 835.6L1062.9 841.2L1062.9 871.9L1038.6 883.1 Z"/><path fill="#6b6b6b"  d="M1056.8 871.9L1062.9 832.8L1084.2 810.4L1107.0 785.2L1129.8 765.6L1136.6 765.6L1136.6 855.2L1099.4 863.5L1076.6 871.9 Z"/><path fill="#1f1f1f"  d="M1008.2 807.6L1008.2 782.4L1053.8 788.0L1091.8 782.4L1091.8 804.8L1053.8 804.8 Z"/><path fill="#333333"  d="M1076.6 788.0L1107.0 743.2L1136.6 737.6L1136.6 771.2L1107.0 788.0 Z"/><path fill="#e0e0e0"  d="M1147.3 995.1L1147.3 911.1L1166.3 919.5L1167.0 995.1 Z"/><path fill="#999999"  d="M1147.3 911.1L1148.0 855.2L1166.3 877.5L1166.3 919.5 Z"/><path fill="#e0e0e0"  d="M1168.6 995.1L1168.6 925.1L1189.8 925.1L1189.8 995.1 Z"/><path fill="#999999"  d="M1168.6 925.1L1169.3 855.2L1189.8 855.2L1189.8 925.1 Z"/><path fill="#ebebeb"  d="M1192.9 995.1L1192.9 955.9L1232.4 958.7L1233.2 995.1 Z"/><path fill="#8c8c8c"  d="M1192.9 958.7L1192.9 863.5L1213.4 871.9L1230.9 891.5L1231.6 961.5 Z"/><path fill="#666666"  d="M1192.9 863.5L1192.9 804.8L1205.8 810.4L1213.4 849.6L1213.4 871.9 Z"/><path fill="#4c4c4c"  d="M1214.9 841.2L1214.9 810.4L1225.6 816.0L1225.6 838.4 Z"/></g></mask>
<mask id="sm2" maskUnits="userSpaceOnUse" x="932.2" y="715.2" width="373.0" height="279.9"><g filter="url(#b2)"><path fill="#6b6b6b"  d="M1148.8 866.3L1149.6 771.2L1157.2 776.8L1166.3 827.2L1166.3 871.9 Z"/><path fill="#9e9e9e"  d="M1169.3 827.2L1170.8 757.2L1177.7 757.2L1189.8 832.8L1189.8 863.5L1170.8 863.5 Z"/></g></mask>
</defs>
<g clip-path="url(#sc)"><g filter="url(#jet)">
<rect x="932.2" y="715.2" width="373.0" height="279.9" fill="url(#sb)"/>
<g filter="url(#b2)"><path fill="#fff" fill-opacity="0.15" d="M1004.4 995.1L1004.4 821.6L1053.8 827.2L1084.2 799.2L1136.6 757.2L1137.4 995.1 Z"/><path fill="#fff" fill-opacity="0.16" d="M1004.4 995.1L1004.4 919.5L1069.0 930.7L1136.6 925.1L1137.4 995.1 Z"/><path fill="#fff" fill-opacity="0.22" d="M1004.4 877.5L1004.4 821.6L1038.6 835.6L1062.9 841.2L1062.9 871.9 Z"/><path fill="#fff" fill-opacity="0.18" d="M1062.9 860.7L1062.9 832.8L1107.0 785.2L1136.6 765.6L1136.6 841.2L1099.4 855.2 Z"/><path fill="#fff" fill-opacity="0.26" d="M1006.7 802.0L1006.7 782.4L1091.8 782.4L1091.8 802.0 Z"/><path fill="#fff" fill-opacity="0.12" d="M1147.3 995.1L1148.0 771.2L1189.1 760.0L1189.8 995.1 Z"/><path fill="#fff" fill-opacity="0.12" d="M1147.3 995.1L1147.3 911.1L1189.8 911.1L1189.8 995.1 Z"/><path fill="#fff" fill-opacity="0.2" d="M1170.8 855.2L1172.4 760.0L1178.4 760.0L1189.8 841.2L1189.8 866.3 Z"/><path fill="#fff" fill-opacity="0.12" d="M1192.9 995.1L1192.9 810.4L1211.9 855.2L1231.6 888.7L1233.2 995.1 Z"/><path fill="#fff" fill-opacity="0.15" d="M1192.9 995.1L1192.9 955.9L1232.4 958.7L1233.2 995.1 Z"/><path fill="#fff" fill-opacity="0.14" d="M1192.9 863.5L1192.9 804.8L1205.8 810.4L1213.4 855.2 Z"/><path fill="#fff" fill-opacity="0.2" d="M1233.2 995.1L1231.6 855.2L1232.4 760.0L1248.4 760.0L1249.9 995.1 Z"/><path fill="#fff" fill-opacity="0.12" d="M1232.4 841.2L1232.4 765.6L1248.4 765.6L1248.4 841.2 Z"/><rect x="1249.9" y="911.1" width="55.3" height="84.0" fill="#fff" fill-opacity="0.05"/></g>
<g filter="url(#b1)"><rect x="1001.5" y="729.2" width="3.0" height="265.9" fill="#fff" fill-opacity="0.3"/><rect x="1001.5" y="715.2" width="2.1" height="28.0" fill="#fff" fill-opacity="0.15"/><rect x="1141.7" y="743.2" width="6.1" height="251.9" fill="#fff" fill-opacity="0.36"/><rect x="1141.7" y="715.2" width="6.1" height="28.0" fill="#fff" fill-opacity="0.22"/><rect x="1189.1" y="715.2" width="4.3" height="279.9" fill="#fff" fill-opacity="0.3"/><rect x="1234.7" y="715.2" width="12.2" height="36.4" fill="#fff" fill-opacity="0.17"/><rect x="1137.4" y="743.2" width="4.3" height="251.9" fill="#000" fill-opacity="0.1"/></g>
<path fill="#000" fill-opacity="0.3" d="M1015.5 725.9h2.2v2.6h-2.2zM1272.2 728.7h2.2v2.6h-2.2zM1113.7 765.0h2.2v2.6h-2.2zM1124.7 736.1h2.2v2.6h-2.2zM1043.1 729.9h2.2v2.6h-2.2zM992.0 774.8h2.2v2.6h-2.2zM1257.9 737.2h2.2v2.6h-2.2zM1042.8 773.2h2.2v2.6h-2.2zM1165.4 781.6h2.2v2.6h-2.2zM1031.7 768.2h2.2v2.6h-2.2zM1038.6 744.9h2.2v2.6h-2.2zM986.8 757.7h2.2v2.6h-2.2zM994.7 738.9h2.2v2.6h-2.2zM1220.9 750.2h2.2v2.6h-2.2zM942.2 796.7h2.2v2.6h-2.2zM1296.9 724.2h2.2v2.6h-2.2zM1029.2 727.1h2.2v2.6h-2.2zM1273.7 724.9h2.2v2.6h-2.2zM934.5 728.9h2.2v2.6h-2.2zM1112.4 724.7h2.2v2.6h-2.2zM944.4 756.5h2.2v2.6h-2.2zM1167.8 724.4h2.2v2.6h-2.2zM946.8 742.2h2.2v2.6h-2.2zM1135.0 733.2h2.2v2.6h-2.2zM1023.7 756.8h2.2v2.6h-2.2zM1226.7 762.5h2.2v2.6h-2.2zM1115.5 765.6h2.2v2.6h-2.2zM1148.7 742.0h2.2v2.6h-2.2zM1075.0 725.5h2.2v2.6h-2.2zM1121.8 719.3h2.2v2.6h-2.2zM938.3 729.8h2.2v2.6h-2.2zM1250.5 717.2h2.2v2.6h-2.2zM1123.4 765.5h2.2v2.6h-2.2zM941.2 724.1h2.2v2.6h-2.2zM1229.0 716.7h2.2v2.6h-2.2zM953.6 722.8h2.2v2.6h-2.2zM1056.1 739.0h2.2v2.6h-2.2zM1285.1 723.1h2.2v2.6h-2.2zM1083.9 726.0h2.2v2.6h-2.2zM964.2 740.6h2.2v2.6h-2.2zM1127.8 742.4h2.2v2.6h-2.2zM1289.3 726.3h2.2v2.6h-2.2zM1217.4 744.4h2.2v2.6h-2.2zM1216.4 717.7h2.2v2.6h-2.2zM964.3 724.7h2.2v2.6h-2.2zM1022.0 737.3h2.2v2.6h-2.2zM955.9 763.7h2.2v2.6h-2.2zM1031.1 723.0h2.2v2.6h-2.2zM957.1 724.6h2.2v2.6h-2.2zM1231.3 721.0h2.2v2.6h-2.2zM996.4 734.2h2.2v2.6h-2.2zM1150.9 717.9h2.2v2.6h-2.2zM1045.2 733.0h2.2v2.6h-2.2zM1107.9 748.7h2.2v2.6h-2.2zM1174.0 792.7h2.2v2.6h-2.2zM1262.5 740.5h2.2v2.6h-2.2zM1103.0 782.2h2.2v2.6h-2.2zM1128.0 756.2h2.2v2.6h-2.2zM1011.5 769.1h2.2v2.6h-2.2zM1156.3 745.5h2.2v2.6h-2.2zM1299.8 744.7h2.2v2.6h-2.2zM1014.2 780.0h2.2v2.6h-2.2zM1051.1 778.4h2.2v2.6h-2.2zM1068.3 814.1h2.2v2.6h-2.2zM1031.4 767.0h2.2v2.6h-2.2zM983.2 743.0h2.2v2.6h-2.2zM1050.8 730.3h2.2v2.6h-2.2zM1184.0 777.2h2.2v2.6h-2.2zM1170.4 792.7h2.2v2.6h-2.2zM1201.5 764.3h2.2v2.6h-2.2zM1156.6 779.4h2.2v2.6h-2.2zM1064.4 733.8h2.2v2.6h-2.2zM1047.7 764.4h2.2v2.6h-2.2zM1024.2 722.7h2.2v2.6h-2.2zM938.5 736.3h2.2v2.6h-2.2zM994.8 719.2h2.2v2.6h-2.2zM1062.1 723.2h2.2v2.6h-2.2zM1151.6 736.5h2.2v2.6h-2.2zM992.6 762.3h2.2v2.6h-2.2zM1170.9 779.2h2.2v2.6h-2.2zM1121.4 731.5h2.2v2.6h-2.2zM1297.8 753.5h2.2v2.6h-2.2zM1217.5 720.2h2.2v2.6h-2.2zM1276.5 719.4h2.2v2.6h-2.2zM1269.0 745.3h2.2v2.6h-2.2zM986.4 744.0h2.2v2.6h-2.2zM1083.7 728.7h2.2v2.6h-2.2zM933.9 724.4h2.2v2.6h-2.2zM1206.1 724.6h2.2v2.6h-2.2zM1148.5 733.9h2.2v2.6h-2.2zM1288.0 765.9h2.2v2.6h-2.2zM1073.6 792.5h2.2v2.6h-2.2zM1207.4 716.6h2.2v2.6h-2.2zM1044.4 728.2h2.2v2.6h-2.2zM980.2 770.6h2.2v2.6h-2.2zM1008.5 729.5h2.2v2.6h-2.2zM1014.3 753.5h2.2v2.6h-2.2z"/>
<g mask="url(#sm)"><path filter="url(#b1)" fill="#fff" d="M1004.6 981.4L1008.5 982.1L1012.5 982.4L1016.4 982.6L1020.4 982.7L1024.3 982.8L1028.3 982.9L1032.2 982.9L1036.2 982.8L1040.1 982.8L1044.1 982.7L1048.0 982.6L1052.0 982.5L1055.9 982.3L1059.9 982.2L1063.8 982.0L1067.8 981.8L1071.7 981.6L1075.7 981.4L1079.6 981.1L1083.6 980.9L1087.5 980.7L1091.5 980.5L1095.4 980.2L1099.4 980.0L1103.4 979.7L1107.3 979.4L1111.3 979.2L1115.2 978.9L1119.2 978.6L1123.1 978.4L1127.1 978.2L1131.0 977.9L1135.0 977.7L1137.4 978.6L1137.4 985.6L1135.0 985.1L1131.0 985.2L1127.1 985.4L1123.1 985.5L1119.2 985.6L1115.2 985.8L1111.3 985.9L1107.3 986.1L1103.4 986.3L1099.4 986.4L1095.4 986.5L1091.5 986.7L1087.5 986.8L1083.6 986.9L1079.6 987.1L1075.7 987.2L1071.7 987.3L1067.8 987.5L1063.8 987.6L1059.9 987.7L1055.9 987.8L1052.0 987.9L1048.0 987.9L1044.1 988.0L1040.1 988.0L1036.2 988.1L1032.2 988.1L1028.3 988.1L1024.3 988.0L1020.4 988.0L1016.4 987.9L1012.5 987.8L1008.5 987.6L1004.6 987.2ZM1004.6 970.6L1008.5 971.9L1012.5 972.3L1016.4 972.8L1020.4 972.9L1024.3 973.1L1028.3 973.3L1032.2 973.3L1036.2 973.2L1040.1 973.1L1044.1 972.9L1048.0 972.8L1052.0 972.6L1055.9 972.3L1059.9 972.0L1063.8 971.7L1067.8 971.4L1071.7 971.0L1075.7 970.6L1079.6 970.1L1083.6 969.7L1087.5 969.3L1091.5 968.9L1095.4 968.5L1099.4 968.1L1103.4 967.6L1107.3 967.1L1111.3 966.6L1115.2 966.1L1119.2 965.7L1123.1 965.2L1127.1 964.8L1131.0 964.4L1135.0 964.0L1137.4 965.6L1137.4 972.6L1135.0 971.4L1131.0 971.7L1127.1 972.0L1123.1 972.3L1119.2 972.7L1115.2 973.0L1111.3 973.4L1107.3 973.8L1103.4 974.1L1099.4 974.5L1095.4 974.8L1091.5 975.1L1087.5 975.5L1083.6 975.8L1079.6 976.1L1075.7 976.4L1071.7 976.7L1067.8 977.0L1063.8 977.3L1059.9 977.5L1055.9 977.7L1052.0 977.9L1048.0 978.1L1044.1 978.2L1040.1 978.3L1036.2 978.4L1032.2 978.5L1028.3 978.5L1024.3 978.3L1020.4 978.2L1016.4 978.1L1012.5 977.8L1008.5 977.4L1004.6 976.5ZM1004.6 959.9L1008.5 961.7L1012.5 962.3L1016.4 962.9L1020.4 963.2L1024.3 963.4L1028.3 963.6L1032.2 963.7L1036.2 963.5L1040.1 963.4L1044.1 963.2L1048.0 963.0L1052.0 962.7L1055.9 962.2L1059.9 961.8L1063.8 961.4L1067.8 960.9L1071.7 960.3L1075.7 959.7L1079.6 959.2L1083.6 958.6L1087.5 958.0L1091.5 957.4L1095.4 956.8L1099.4 956.2L1103.4 955.5L1107.3 954.8L1111.3 954.1L1115.2 953.4L1119.2 952.7L1123.1 952.1L1127.1 951.5L1131.0 950.9L1135.0 950.3L1137.4 952.5L1137.4 959.6L1135.0 957.7L1131.0 958.2L1127.1 958.7L1123.1 959.2L1119.2 959.7L1115.2 960.3L1111.3 960.8L1107.3 961.4L1103.4 962.0L1099.4 962.6L1095.4 963.1L1091.5 963.6L1087.5 964.1L1083.6 964.6L1079.6 965.1L1075.7 965.6L1071.7 966.1L1067.8 966.5L1063.8 966.9L1059.9 967.3L1055.9 967.7L1052.0 968.0L1048.0 968.3L1044.1 968.4L1040.1 968.6L1036.2 968.8L1032.2 968.9L1028.3 968.8L1024.3 968.6L1020.4 968.4L1016.4 968.2L1012.5 967.7L1008.5 967.2L1004.6 965.7ZM1004.6 949.1L1008.5 951.4L1012.5 952.3L1016.4 953.1L1020.4 953.4L1024.3 953.7L1028.3 954.0L1032.2 954.1L1036.2 953.9L1040.1 953.7L1044.1 953.4L1048.0 953.2L1052.0 952.7L1055.9 952.2L1059.9 951.6L1063.8 951.1L1067.8 950.4L1071.7 949.7L1075.7 948.9L1079.6 948.2L1083.6 947.4L1087.5 946.6L1091.5 945.9L1095.4 945.1L1099.4 944.3L1103.4 943.4L1107.3 942.4L1111.3 941.5L1115.2 940.6L1119.2 939.8L1123.1 938.9L1127.1 938.1L1131.0 937.3L1135.0 936.6L1137.4 939.5L1137.4 946.6L1135.0 944.0L1131.0 944.6L1127.1 945.3L1123.1 946.0L1119.2 946.8L1115.2 947.5L1111.3 948.3L1107.3 949.1L1103.4 949.9L1099.4 950.7L1095.4 951.4L1091.5 952.1L1087.5 952.8L1083.6 953.4L1079.6 954.1L1075.7 954.8L1071.7 955.4L1067.8 956.1L1063.8 956.6L1059.9 957.1L1055.9 957.6L1052.0 958.1L1048.0 958.5L1044.1 958.7L1040.1 958.9L1036.2 959.1L1032.2 959.3L1028.3 959.2L1024.3 958.9L1020.4 958.7L1016.4 958.4L1012.5 957.7L1008.5 956.9L1004.6 954.9ZM1004.6 938.3L1008.5 941.2L1012.5 942.3L1016.4 943.2L1020.4 943.6L1024.3 944.0L1028.3 944.4L1032.2 944.6L1036.2 944.3L1040.1 943.9L1044.1 943.6L1048.0 943.3L1052.0 942.8L1055.9 942.1L1059.9 941.4L1063.8 940.7L1067.8 940.0L1071.7 939.0L1075.7 938.1L1079.6 937.2L1083.6 936.2L1087.5 935.3L1091.5 934.3L1095.4 933.4L1099.4 932.4L1103.4 931.3L1107.3 930.1L1111.3 929.0L1115.2 927.8L1119.2 926.8L1123.1 925.8L1127.1 924.8L1131.0 923.8L1135.0 922.9L1137.4 926.5L1137.4 933.5L1135.0 930.3L1131.0 931.1L1127.1 932.0L1123.1 932.9L1119.2 933.8L1115.2 934.7L1111.3 935.7L1107.3 936.8L1103.4 937.8L1099.4 938.8L1095.4 939.7L1091.5 940.6L1087.5 941.4L1083.6 942.3L1079.6 943.1L1075.7 943.9L1071.7 944.8L1067.8 945.6L1063.8 946.3L1059.9 946.9L1055.9 947.6L1052.0 948.2L1048.0 948.6L1044.1 948.9L1040.1 949.2L1036.2 949.5L1032.2 949.7L1028.3 949.6L1024.3 949.2L1020.4 948.9L1016.4 948.6L1012.5 947.7L1008.5 946.7L1004.6 944.1ZM1004.6 927.5L1008.5 931.0L1012.5 932.2L1016.4 933.4L1020.4 933.9L1024.3 934.3L1028.3 934.8L1032.2 935.0L1036.2 934.6L1040.1 934.2L1044.1 933.9L1048.0 933.5L1052.0 932.9L1055.9 932.1L1059.9 931.3L1063.8 930.4L1067.8 929.5L1071.7 928.4L1075.7 927.3L1079.6 926.2L1083.6 925.1L1087.5 923.9L1091.5 922.8L1095.4 921.7L1099.4 920.5L1103.4 919.1L1107.3 917.8L1111.3 916.4L1115.2 915.1L1119.2 913.8L1123.1 912.6L1127.1 911.4L1131.0 910.3L1135.0 909.1L1137.4 913.5L1137.4 920.5L1135.0 916.6L1131.0 917.6L1127.1 918.6L1123.1 919.7L1119.2 920.8L1115.2 922.0L1111.3 923.2L1107.3 924.4L1103.4 925.7L1099.4 926.9L1095.4 928.0L1091.5 929.0L1087.5 930.1L1083.6 931.1L1079.6 932.1L1075.7 933.1L1071.7 934.1L1067.8 935.2L1063.8 936.0L1059.9 936.7L1055.9 937.5L1052.0 938.3L1048.0 938.8L1044.1 939.1L1040.1 939.5L1036.2 939.8L1032.2 940.1L1028.3 940.0L1024.3 939.5L1020.4 939.1L1016.4 938.7L1012.5 937.7L1008.5 936.5L1004.6 933.4ZM1004.6 917.1L1008.5 921.1L1012.5 922.6L1016.4 923.9L1020.4 924.4L1024.3 925.0L1028.3 925.5L1032.2 925.7L1036.2 925.3L1040.1 924.9L1044.1 924.4L1048.0 924.0L1052.0 923.3L1055.9 922.4L1059.9 921.4L1063.8 920.5L1067.8 919.4L1071.7 918.1L1075.7 916.9L1079.6 915.6L1083.6 914.3L1087.5 913.0L1091.5 911.7L1095.4 910.4L1099.4 909.0L1103.4 907.5L1107.3 905.9L1111.3 904.3L1115.2 902.7L1119.2 901.3L1123.1 899.9L1127.1 898.5L1131.0 897.2L1135.0 895.9L1137.4 900.9L1137.4 907.1L1135.0 902.4L1131.0 903.6L1127.1 904.8L1123.1 906.1L1119.2 907.4L1115.2 908.7L1111.3 910.2L1107.3 911.7L1103.4 913.1L1099.4 914.6L1095.4 915.9L1091.5 917.1L1087.5 918.3L1083.6 919.5L1079.6 920.7L1075.7 921.9L1071.7 923.1L1067.8 924.3L1063.8 925.3L1059.9 926.2L1055.9 927.1L1052.0 928.0L1048.0 928.6L1044.1 929.0L1040.1 929.4L1036.2 929.8L1032.2 930.2L1028.3 930.0L1024.3 929.5L1020.4 929.0L1016.4 928.5L1012.5 927.3L1008.5 925.9L1004.6 922.2ZM1004.6 906.4L1008.5 910.9L1012.5 912.5L1016.4 914.1L1020.4 914.7L1024.3 915.3L1028.3 915.9L1032.2 916.1L1036.2 915.6L1040.1 915.2L1044.1 914.7L1048.0 914.2L1052.0 913.4L1055.9 912.3L1059.9 911.2L1063.8 910.2L1067.8 909.0L1071.7 907.5L1075.7 906.0L1079.6 904.6L1083.6 903.1L1087.5 901.6L1091.5 900.1L1095.4 898.6L1099.4 897.1L1103.4 895.3L1107.3 893.5L1111.3 891.7L1115.2 890.0L1119.2 888.4L1123.1 886.8L1127.1 885.2L1131.0 883.7L1135.0 882.2L1137.4 887.9L1137.4 894.0L1135.0 888.7L1131.0 890.0L1127.1 891.5L1123.1 893.0L1119.2 894.5L1115.2 896.0L1111.3 897.6L1107.3 899.3L1103.4 901.0L1099.4 902.7L1095.4 904.1L1091.5 905.6L1087.5 907.0L1083.6 908.4L1079.6 909.8L1075.7 911.1L1071.7 912.5L1067.8 913.9L1063.8 915.0L1059.9 916.0L1055.9 917.1L1052.0 918.1L1048.0 918.8L1044.1 919.3L1040.1 919.7L1036.2 920.2L1032.2 920.6L1028.3 920.4L1024.3 919.8L1020.4 919.2L1016.4 918.7L1012.5 917.3L1008.5 915.7L1004.6 911.4ZM1004.6 895.6L1008.5 900.6L1012.5 902.5L1016.4 904.2L1020.4 904.9L1024.3 905.6L1028.3 906.2L1032.2 906.5L1036.2 906.0L1040.1 905.5L1044.1 904.9L1048.0 904.4L1052.0 903.5L1055.9 902.3L1059.9 901.1L1063.8 899.8L1067.8 898.5L1071.7 896.9L1075.7 895.2L1079.6 893.6L1083.6 892.0L1087.5 890.3L1091.5 888.6L1095.4 886.9L1099.4 885.2L1103.4 883.2L1107.3 881.2L1111.3 879.2L1115.2 877.2L1119.2 875.4L1123.1 873.6L1127.1 871.9L1131.0 870.1L1135.0 868.5L1137.4 874.9L1137.4 881.0L1135.0 874.9L1131.0 876.5L1127.1 878.1L1123.1 879.8L1119.2 881.5L1115.2 883.2L1111.3 885.1L1107.3 887.0L1103.4 888.9L1099.4 890.8L1095.4 892.4L1091.5 894.0L1087.5 895.6L1083.6 897.2L1079.6 898.8L1075.7 900.3L1071.7 901.9L1067.8 903.4L1063.8 904.7L1059.9 905.8L1055.9 907.0L1052.0 908.2L1048.0 909.0L1044.1 909.5L1040.1 910.0L1036.2 910.5L1032.2 911.0L1028.3 910.8L1024.3 910.1L1020.4 909.5L1016.4 908.8L1012.5 907.2L1008.5 905.4L1004.6 900.6ZM1004.6 884.8L1008.5 890.4L1012.5 892.5L1016.4 894.4L1020.4 895.1L1024.3 895.9L1028.3 896.6L1032.2 896.9L1036.2 896.3L1040.1 895.7L1044.1 895.2L1048.0 894.6L1052.0 893.6L1055.9 892.2L1059.9 890.9L1063.8 889.5L1067.8 888.0L1071.7 886.2L1075.7 884.4L1079.6 882.6L1083.6 880.8L1087.5 878.9L1091.5 877.1L1095.4 875.2L1099.4 873.3L1103.4 871.1L1107.3 868.9L1111.3 866.6L1115.2 864.4L1119.2 862.5L1123.1 860.5L1127.1 858.5L1131.0 856.6L1135.0 854.8L1137.4 861.9L1137.4 868.0L1135.0 861.2L1131.0 863.0L1127.1 864.8L1123.1 866.7L1119.2 868.6L1115.2 870.4L1111.3 872.5L1107.3 874.7L1103.4 876.8L1099.4 878.9L1095.4 880.7L1091.5 882.5L1087.5 884.3L1083.6 886.0L1079.6 887.8L1075.7 889.5L1071.7 891.2L1067.8 893.0L1063.8 894.4L1059.9 895.7L1055.9 897.0L1052.0 898.2L1048.0 899.2L1044.1 899.7L1040.1 900.3L1036.2 900.9L1032.2 901.4L1028.3 901.1L1024.3 900.4L1020.4 899.7L1016.4 899.0L1012.5 897.2L1008.5 895.2L1004.6 889.9ZM1004.6 874.0L1008.5 880.2L1012.5 882.5L1016.4 884.5L1020.4 885.4L1024.3 886.2L1028.3 887.0L1032.2 887.4L1036.2 886.7L1040.1 886.0L1044.1 885.4L1048.0 884.7L1052.0 883.7L1055.9 882.2L1059.9 880.7L1063.8 879.2L1067.8 877.6L1071.7 875.6L1075.7 873.6L1079.6 871.6L1083.6 869.6L1087.5 867.6L1091.5 865.5L1095.4 863.5L1099.4 861.5L1103.4 859.0L1107.3 856.5L1111.3 854.1L1115.2 851.7L1119.2 849.5L1123.1 847.3L1127.1 845.2L1131.0 843.1L1135.0 841.1L1137.4 848.9L1137.4 855.0L1135.0 847.5L1131.0 849.4L1127.1 851.4L1123.1 853.5L1119.2 855.6L1115.2 857.7L1111.3 860.0L1107.3 862.3L1103.4 864.7L1099.4 867.0L1095.4 869.0L1091.5 871.0L1087.5 872.9L1083.6 874.9L1079.6 876.8L1075.7 878.7L1071.7 880.6L1067.8 882.5L1063.8 884.1L1059.9 885.5L1055.9 886.9L1052.0 888.3L1048.0 889.4L1044.1 890.0L1040.1 890.6L1036.2 891.2L1032.2 891.9L1028.3 891.5L1024.3 890.7L1020.4 889.9L1016.4 889.2L1012.5 887.2L1008.5 885.0L1004.6 879.1ZM1004.6 863.3L1008.5 870.0L1012.5 872.4L1016.4 874.7L1020.4 875.6L1024.3 876.5L1028.3 877.4L1032.2 877.8L1036.2 877.0L1040.1 876.3L1044.1 875.6L1048.0 874.9L1052.0 873.7L1055.9 872.1L1059.9 870.5L1063.8 868.9L1067.8 867.1L1071.7 865.0L1075.7 862.8L1079.6 860.6L1083.6 858.5L1087.5 856.2L1091.5 854.0L1095.4 851.8L1099.4 849.6L1103.4 846.9L1107.3 844.2L1111.3 841.5L1115.2 838.9L1119.2 836.5L1123.1 834.2L1127.1 831.8L1131.0 829.6L1135.0 827.4L1137.4 835.9L1137.4 842.0L1135.0 833.8L1131.0 835.9L1127.1 838.1L1123.1 840.4L1119.2 842.6L1115.2 844.9L1111.3 847.4L1107.3 850.0L1103.4 852.6L1099.4 855.1L1095.4 857.3L1091.5 859.4L1087.5 861.6L1083.6 863.7L1079.6 865.8L1075.7 867.9L1071.7 870.0L1067.8 872.0L1063.8 873.7L1059.9 875.3L1055.9 876.9L1052.0 878.4L1048.0 879.5L1044.1 880.2L1040.1 880.9L1036.2 881.6L1032.2 882.3L1028.3 881.9L1024.3 881.0L1020.4 880.2L1016.4 879.3L1012.5 877.2L1008.5 874.8L1004.6 868.3ZM1004.6 852.5L1008.5 859.7L1012.5 862.4L1016.4 864.9L1020.4 865.8L1024.3 866.8L1028.3 867.7L1032.2 868.2L1036.2 867.4L1040.1 866.6L1044.1 865.9L1048.0 865.1L1052.0 863.8L1055.9 862.1L1059.9 860.3L1063.8 858.6L1067.8 856.7L1071.7 854.3L1075.7 852.0L1079.6 849.6L1083.6 847.3L1087.5 844.9L1091.5 842.5L1095.4 840.1L1099.4 837.7L1103.4 834.8L1107.3 831.9L1111.3 829.0L1115.2 826.2L1119.2 823.6L1123.1 821.0L1127.1 818.5L1131.0 816.0L1135.0 813.7L1137.4 822.8L1137.4 829.0L1135.0 820.1L1131.0 822.4L1127.1 824.7L1123.1 827.2L1119.2 829.7L1115.2 832.2L1111.3 834.9L1107.3 837.7L1103.4 840.5L1099.4 843.3L1095.4 845.6L1091.5 847.9L1087.5 850.2L1083.6 852.5L1079.6 854.8L1075.7 857.1L1071.7 859.3L1067.8 861.6L1063.8 863.4L1059.9 865.1L1055.9 866.8L1052.0 868.5L1048.0 869.7L1044.1 870.4L1040.1 871.2L1036.2 871.9L1032.2 872.7L1028.3 872.3L1024.3 871.3L1020.4 870.4L1016.4 869.5L1012.5 867.1L1008.5 864.5L1004.6 857.5ZM1004.6 841.7L1008.5 849.5L1012.5 852.4L1016.4 855.0L1020.4 856.0L1024.3 857.1L1028.3 858.1L1032.2 858.6L1036.2 857.8L1040.1 856.9L1044.1 856.1L1048.0 855.3L1052.0 853.9L1055.9 852.0L1059.9 850.1L1063.8 848.3L1067.8 846.2L1071.7 843.7L1075.7 841.2L1079.6 838.6L1083.6 836.1L1087.5 833.5L1091.5 830.9L1095.4 828.4L1099.4 825.8L1103.4 822.7L1107.3 819.5L1111.3 816.4L1115.2 813.4L1119.2 810.6L1123.1 807.9L1127.1 805.1L1131.0 802.5L1135.0 800.0L1137.4 809.8L1137.4 815.9L1135.0 806.4L1131.0 808.8L1127.1 811.4L1123.1 814.1L1119.2 816.7L1115.2 819.4L1111.3 822.3L1107.3 825.3L1103.4 828.3L1099.4 831.4L1095.4 833.9L1091.5 836.4L1087.5 838.9L1083.6 841.4L1079.6 843.8L1075.7 846.2L1071.7 848.7L1067.8 851.1L1063.8 853.1L1059.9 854.9L1055.9 856.7L1052.0 858.6L1048.0 859.9L1044.1 860.7L1040.1 861.5L1036.2 862.3L1032.2 863.1L1028.3 862.6L1024.3 861.6L1020.4 860.6L1016.4 859.6L1012.5 857.1L1008.5 854.3L1004.6 846.8ZM1004.6 830.9L1008.5 839.3L1012.5 842.4L1016.4 845.2L1020.4 846.3L1024.3 847.4L1028.3 848.5L1032.2 849.0L1036.2 848.1L1040.1 847.2L1044.1 846.3L1048.0 845.4L1052.0 844.0L1055.9 842.0L1059.9 840.0L1063.8 837.9L1067.8 835.7L1071.7 833.0L1075.7 830.3L1079.6 827.6L1083.6 824.9L1087.5 822.2L1091.5 819.4L1095.4 816.6L1099.4 813.9L1103.4 810.5L1107.3 807.2L1111.3 803.9L1115.2 800.6L1119.2 797.7L1123.1 794.7L1127.1 791.8L1131.0 789.0L1135.0 786.3L1137.4 796.8L1137.4 802.9L1135.0 792.7L1131.0 795.3L1127.1 798.0L1123.1 800.9L1119.2 803.8L1115.2 806.6L1111.3 809.8L1107.3 813.0L1103.4 816.2L1099.4 819.5L1095.4 822.1L1091.5 824.8L1087.5 827.5L1083.6 830.2L1079.6 832.8L1075.7 835.4L1071.7 838.0L1067.8 840.7L1063.8 842.8L1059.9 844.7L1055.9 846.7L1052.0 848.7L1048.0 850.1L1044.1 850.9L1040.1 851.8L1036.2 852.6L1032.2 853.5L1028.3 853.0L1024.3 851.9L1020.4 850.9L1016.4 849.8L1012.5 847.1L1008.5 844.1L1004.6 836.0ZM1004.6 820.1L1008.5 829.0L1012.5 832.3L1016.4 835.3L1020.4 836.5L1024.3 837.7L1028.3 838.9L1032.2 839.4L1036.2 838.5L1040.1 837.5L1044.1 836.6L1048.0 835.6L1052.0 834.1L1055.9 831.9L1059.9 829.8L1063.8 827.6L1067.8 825.3L1071.7 822.4L1075.7 819.5L1079.6 816.7L1083.6 813.8L1087.5 810.8L1091.5 807.9L1095.4 804.9L1099.4 802.0L1103.4 798.4L1107.3 794.9L1111.3 791.3L1115.2 787.9L1119.2 784.7L1123.1 781.6L1127.1 778.4L1131.0 775.4L1135.0 772.5L1137.4 783.8L1137.4 789.9L1135.0 779.0L1131.0 781.8L1127.1 784.7L1123.1 787.8L1119.2 790.8L1115.2 793.9L1111.3 797.2L1107.3 800.7L1103.4 804.1L1099.4 807.6L1095.4 810.4L1091.5 813.3L1087.5 816.2L1083.6 819.0L1079.6 821.8L1075.7 824.6L1071.7 827.4L1067.8 830.2L1063.8 832.5L1059.9 834.6L1055.9 836.6L1052.0 838.7L1048.0 840.2L1044.1 841.2L1040.1 842.1L1036.2 843.0L1032.2 843.9L1028.3 843.4L1024.3 842.2L1020.4 841.1L1016.4 840.0L1012.5 837.1L1008.5 833.8L1004.6 825.2ZM1004.6 809.4L1008.5 818.8L1012.5 822.3L1016.4 825.5L1020.4 826.7L1024.3 828.0L1028.3 829.2L1032.2 829.8L1036.2 828.8L1040.1 827.8L1044.1 826.8L1048.0 825.8L1052.0 824.2L1055.9 821.9L1059.9 819.6L1063.8 817.3L1067.8 814.8L1071.7 811.8L1075.7 808.7L1079.6 805.7L1083.6 802.6L1087.5 799.5L1091.5 796.3L1095.4 793.2L1099.4 790.1L1103.4 786.3L1107.3 782.6L1111.3 778.8L1115.2 775.1L1119.2 771.8L1123.1 768.4L1127.1 765.1L1131.0 761.9L1135.0 758.8L1137.4 770.8L1137.4 776.9L1135.0 765.3L1131.0 768.3L1127.1 771.4L1123.1 774.6L1119.2 777.8L1115.2 781.1L1111.3 784.7L1107.3 788.3L1103.4 792.0L1099.4 795.7L1095.4 798.7L1091.5 801.8L1087.5 804.8L1083.6 807.9L1079.6 810.8L1075.7 813.8L1071.7 816.8L1067.8 819.7L1063.8 822.2L1059.9 824.4L1055.9 826.6L1052.0 828.8L1048.0 830.4L1044.1 831.4L1040.1 832.4L1036.2 833.3L1032.2 834.3L1028.3 833.8L1024.3 832.6L1020.4 831.3L1016.4 830.1L1012.5 827.0L1008.5 823.6L1004.6 814.4ZM1004.6 798.6L1008.5 808.6L1012.5 812.3L1016.4 815.6L1020.4 817.0L1024.3 818.3L1028.3 819.6L1032.2 820.2L1036.2 819.2L1040.1 818.1L1044.1 817.0L1048.0 816.0L1052.0 814.2L1055.9 811.8L1059.9 809.4L1063.8 807.0L1067.8 804.4L1071.7 801.1L1075.7 797.9L1079.6 794.7L1083.6 791.4L1087.5 788.1L1091.5 784.8L1095.4 781.5L1099.4 778.2L1103.4 774.2L1107.3 770.2L1111.3 766.2L1115.2 762.3L1119.2 758.8L1123.1 755.3L1127.1 751.7L1131.0 748.4L1135.0 745.1L1137.4 757.8L1137.4 763.9L1135.0 751.6L1131.0 754.7L1127.1 758.0L1123.1 761.4L1119.2 764.9L1115.2 768.3L1111.3 772.1L1107.3 776.0L1103.4 779.9L1099.4 783.8L1095.4 787.0L1091.5 790.2L1087.5 793.5L1083.6 796.7L1079.6 799.8L1075.7 803.0L1071.7 806.1L1067.8 809.3L1063.8 811.8L1059.9 814.2L1055.9 816.5L1052.0 818.9L1048.0 820.6L1044.1 821.6L1040.1 822.7L1036.2 823.7L1032.2 824.7L1028.3 824.1L1024.3 822.9L1020.4 821.6L1016.4 820.3L1012.5 817.0L1008.5 813.4L1004.6 803.7ZM1004.6 787.8L1008.5 798.4L1012.5 802.3L1016.4 805.8L1020.4 807.2L1024.3 808.6L1028.3 810.0L1032.2 810.6L1036.2 809.5L1040.1 808.4L1044.1 807.3L1048.0 806.1L1052.0 804.3L1055.9 801.8L1059.9 799.2L1063.8 796.7L1067.8 793.9L1071.7 790.5L1075.7 787.1L1079.6 783.7L1083.6 780.3L1087.5 776.8L1091.5 773.3L1095.4 769.8L1099.4 766.3L1103.4 762.1L1107.3 757.9L1111.3 753.7L1115.2 749.6L1119.2 745.8L1123.1 742.1L1127.1 738.4L1131.0 734.8L1135.0 731.4L1137.4 744.7L1137.4 750.9L1135.0 737.9L1131.0 741.2L1127.1 744.7L1123.1 748.3L1119.2 751.9L1115.2 755.6L1111.3 759.6L1107.3 763.7L1103.4 767.8L1099.4 771.9L1095.4 775.3L1091.5 778.7L1087.5 782.1L1083.6 785.5L1079.6 788.8L1075.7 792.2L1071.7 795.5L1067.8 798.8L1063.8 801.5L1059.9 804.0L1055.9 806.5L1052.0 809.0L1048.0 810.8L1044.1 811.9L1040.1 812.9L1036.2 814.0L1032.2 815.1L1028.3 814.5L1024.3 813.2L1020.4 811.8L1016.4 810.4L1012.5 807.0L1008.5 803.2L1004.6 792.9ZM1004.6 777.0L1008.5 788.1L1012.5 792.2L1016.4 796.0L1020.4 797.4L1024.3 798.9L1028.3 800.4L1032.2 801.0L1036.2 799.9L1040.1 798.7L1044.1 797.5L1048.0 796.3L1052.0 794.4L1055.9 791.7L1059.9 789.0L1063.8 786.4L1067.8 783.4L1071.7 779.9L1075.7 776.3L1079.6 772.7L1083.6 769.1L1087.5 765.4L1091.5 761.8L1095.4 758.1L1099.4 754.4L1103.4 750.0L1107.3 745.6L1111.3 741.1L1115.2 736.8L1119.2 732.9L1123.1 729.0L1127.1 725.0L1131.0 721.3L1135.0 717.7L1137.4 731.7L1137.4 737.9L1135.0 724.2L1131.0 727.7L1127.1 731.3L1123.1 735.1L1119.2 739.0L1115.2 742.8L1111.3 747.0L1107.3 751.4L1103.4 755.7L1099.4 760.0L1095.4 763.6L1091.5 767.2L1087.5 770.8L1083.6 774.3L1079.6 777.9L1075.7 781.4L1071.7 784.9L1067.8 788.4L1063.8 791.2L1059.9 793.8L1055.9 796.4L1052.0 799.1L1048.0 800.9L1044.1 802.1L1040.1 803.2L1036.2 804.4L1032.2 805.5L1028.3 804.9L1024.3 803.5L1020.4 802.0L1016.4 800.6L1012.5 797.0L1008.5 792.9L1004.6 782.1ZM1004.6 766.3L1008.5 777.9L1012.5 782.2L1016.4 786.1L1020.4 787.7L1024.3 789.2L1028.3 790.8L1032.2 791.4L1036.2 790.2L1040.1 789.0L1044.1 787.7L1048.0 786.5L1052.0 784.5L1055.9 781.7L1059.9 778.9L1063.8 776.0L1067.8 773.0L1071.7 769.2L1075.7 765.5L1079.6 761.7L1083.6 757.9L1087.5 754.1L1091.5 750.2L1095.4 746.4L1099.4 742.5L1103.4 737.9L1107.3 733.2L1111.3 728.6L1115.2 724.0L1119.2 719.9L1123.1 715.8L1127.1 711.7L1131.0 707.8L1135.0 704.0L1137.4 718.7L1137.4 724.8L1135.0 710.4L1131.0 714.1L1127.1 718.0L1123.1 722.0L1119.2 726.0L1115.2 730.0L1111.3 734.5L1107.3 739.0L1103.4 743.6L1099.4 748.1L1095.4 751.9L1091.5 755.6L1087.5 759.4L1083.6 763.2L1079.6 766.9L1075.7 770.5L1071.7 774.2L1067.8 777.9L1063.8 780.9L1059.9 783.6L1055.9 786.4L1052.0 789.1L1048.0 791.1L1044.1 792.3L1040.1 793.5L1036.2 794.7L1032.2 796.0L1028.3 795.3L1024.3 793.8L1020.4 792.3L1016.4 790.7L1012.5 786.9L1008.5 782.7L1004.6 771.3ZM1004.6 755.5L1008.5 767.7L1012.5 772.2L1016.4 776.3L1020.4 777.9L1024.3 779.5L1028.3 781.1L1032.2 781.9L1036.2 780.6L1040.1 779.3L1044.1 778.0L1048.0 776.7L1052.0 774.6L1055.9 771.6L1059.9 768.7L1063.8 765.7L1067.8 762.5L1071.7 758.6L1075.7 754.6L1079.6 750.7L1083.6 746.8L1087.5 742.7L1091.5 738.7L1095.4 734.6L1099.4 730.6L1103.4 725.7L1107.3 720.9L1111.3 716.0L1115.2 711.3L1119.2 707.0L1123.1 702.7L1127.1 698.4L1131.0 694.2L1135.0 690.3L1137.4 705.7L1137.4 711.8L1135.0 696.7L1131.0 700.6L1127.1 704.6L1123.1 708.8L1119.2 713.1L1115.2 717.3L1111.3 721.9L1107.3 726.7L1103.4 731.4L1099.4 736.2L1095.4 740.1L1091.5 744.1L1087.5 748.1L1083.6 752.0L1079.6 755.9L1075.7 759.7L1071.7 763.6L1067.8 767.4L1063.8 770.6L1059.9 773.5L1055.9 776.3L1052.0 779.2L1048.0 781.3L1044.1 782.6L1040.1 783.8L1036.2 785.1L1032.2 786.4L1028.3 785.7L1024.3 784.1L1020.4 782.5L1016.4 780.9L1012.5 776.9L1008.5 772.5L1004.6 760.6ZM1004.6 744.7L1008.5 757.4L1012.5 762.2L1016.4 766.4L1020.4 768.1L1024.3 769.8L1028.3 771.5L1032.2 772.3L1036.2 770.9L1040.1 769.6L1044.1 768.2L1048.0 766.9L1052.0 764.6L1055.9 761.6L1059.9 758.5L1063.8 755.4L1067.8 752.1L1071.7 747.9L1075.7 743.8L1079.6 739.7L1083.6 735.6L1087.5 731.4L1091.5 727.2L1095.4 722.9L1099.4 718.7L1103.4 713.6L1107.3 708.6L1111.3 703.5L1115.2 698.5L1119.2 694.0L1123.1 689.5L1127.1 685.0L1131.0 680.7L1135.0 676.6L1137.4 692.7L1137.4 698.8L1135.0 683.0L1131.0 687.1L1127.1 691.3L1123.1 695.7L1119.2 700.1L1115.2 704.5L1111.3 709.4L1107.3 714.4L1103.4 719.3L1099.4 724.3L1095.4 728.4L1091.5 732.6L1087.5 736.7L1083.6 740.8L1079.6 744.9L1075.7 748.9L1071.7 752.9L1067.8 757.0L1063.8 760.3L1059.9 763.3L1055.9 766.3L1052.0 769.3L1048.0 771.5L1044.1 772.8L1040.1 774.1L1036.2 775.4L1032.2 776.8L1028.3 776.0L1024.3 774.4L1020.4 772.7L1016.4 771.1L1012.5 766.9L1008.5 762.2L1004.6 749.8ZM1004.6 733.9L1008.5 747.2L1012.5 752.1L1016.4 756.6L1020.4 758.4L1024.3 760.1L1028.3 761.9L1032.2 762.7L1036.2 761.3L1040.1 759.9L1044.1 758.4L1048.0 757.0L1052.0 754.7L1055.9 751.5L1059.9 748.3L1063.8 745.1L1067.8 741.6L1071.7 737.3L1075.7 733.0L1079.6 728.7L1083.6 724.4L1087.5 720.0L1091.5 715.6L1095.4 711.2L1099.4 706.8L1103.4 701.5L1107.3 696.2L1111.3 690.9L1115.2 685.7L1119.2 681.0L1123.1 676.4L1127.1 671.7L1131.0 667.2L1135.0 662.9L1137.4 679.7L1137.4 685.8L1135.0 669.3L1131.0 673.5L1127.1 677.9L1123.1 682.5L1119.2 687.1L1115.2 691.7L1111.3 696.8L1107.3 702.0L1103.4 707.2L1099.4 712.4L1095.4 716.7L1091.5 721.0L1087.5 725.4L1083.6 729.7L1079.6 733.9L1075.7 738.1L1071.7 742.3L1067.8 746.5L1063.8 750.0L1059.9 753.1L1055.9 756.2L1052.0 759.4L1048.0 761.6L1044.1 763.0L1040.1 764.4L1036.2 765.8L1032.2 767.2L1028.3 766.4L1024.3 764.7L1020.4 763.0L1016.4 761.2L1012.5 756.9L1008.5 752.0L1004.6 739.0ZM1004.6 723.2L1008.5 737.0L1012.5 742.1L1016.4 746.8L1020.4 748.6L1024.3 750.4L1028.3 752.3L1032.2 753.1L1036.2 751.6L1040.1 750.1L1044.1 748.7L1048.0 747.2L1052.0 744.8L1055.9 741.5L1059.9 738.1L1063.8 734.8L1067.8 731.1L1071.7 726.7L1075.7 722.2L1079.6 717.7L1083.6 713.3L1087.5 708.7L1091.5 704.1L1095.4 699.5L1099.4 694.9L1103.4 689.4L1107.3 683.9L1111.3 678.4L1115.2 673.0L1119.2 668.1L1123.1 663.2L1127.1 658.3L1131.0 653.7L1135.0 649.2L1137.4 666.7L1137.4 672.8L1135.0 655.6L1131.0 660.0L1127.1 664.6L1123.1 669.4L1119.2 674.2L1115.2 679.0L1111.3 684.3L1107.3 689.7L1103.4 695.1L1099.4 700.5L1095.4 705.0L1091.5 709.5L1087.5 714.0L1083.6 718.5L1079.6 722.9L1075.7 727.3L1071.7 731.7L1067.8 736.1L1063.8 739.6L1059.9 742.9L1055.9 746.2L1052.0 749.5L1048.0 751.8L1044.1 753.3L1040.1 754.7L1036.2 756.1L1032.2 757.6L1028.3 756.8L1024.3 755.0L1020.4 753.2L1016.4 751.4L1012.5 746.8L1008.5 741.8L1004.6 728.2ZM1004.6 712.4L1008.5 726.8L1012.5 732.1L1016.4 736.9L1020.4 738.8L1024.3 740.7L1028.3 742.6L1032.2 743.5L1036.2 742.0L1040.1 740.4L1044.1 738.9L1048.0 737.4L1052.0 734.9L1055.9 731.4L1059.9 727.9L1063.8 724.5L1067.8 720.7L1071.7 716.0L1075.7 711.4L1079.6 706.7L1083.6 702.1L1087.5 697.3L1091.5 692.6L1095.4 687.8L1099.4 683.0L1103.4 677.3L1107.3 671.6L1111.3 665.8L1115.2 660.2L1119.2 655.1L1123.1 650.0L1127.1 645.0L1131.0 640.1L1135.0 635.5L1137.4 653.6L1137.4 659.8L1135.0 641.9L1131.0 646.5L1127.1 651.2L1123.1 656.2L1119.2 661.2L1115.2 666.2L1111.3 671.7L1107.3 677.4L1103.4 683.0L1099.4 688.6L1095.4 693.3L1091.5 698.0L1087.5 702.7L1083.6 707.3L1079.6 711.9L1075.7 716.5L1071.7 721.0L1067.8 725.6L1063.8 729.3L1059.9 732.7L1055.9 736.1L1052.0 739.5L1048.0 742.0L1044.1 743.5L1040.1 745.0L1036.2 746.5L1032.2 748.0L1028.3 747.2L1024.3 745.3L1020.4 743.4L1016.4 741.5L1012.5 736.8L1008.5 731.6L1004.6 717.5ZM1004.6 701.6L1008.5 716.5L1012.5 722.1L1016.4 727.1L1020.4 729.1L1024.3 731.0L1028.3 733.0L1032.2 733.9L1036.2 732.3L1040.1 730.7L1044.1 729.1L1048.0 727.6L1052.0 725.0L1055.9 721.4L1059.9 717.8L1063.8 714.2L1067.8 710.2L1071.7 705.4L1075.7 700.6L1079.6 695.7L1083.6 690.9L1087.5 686.0L1091.5 681.0L1095.4 676.1L1099.4 671.1L1103.4 665.2L1107.3 659.2L1111.3 653.3L1115.2 647.4L1119.2 642.2L1123.1 636.9L1127.1 631.6L1131.0 626.6L1135.0 621.8L1137.4 640.6L1137.4 646.7L1135.0 628.2L1131.0 632.9L1127.1 637.9L1123.1 643.1L1119.2 648.3L1115.2 653.4L1111.3 659.2L1107.3 665.0L1103.4 670.9L1099.4 676.7L1095.4 681.6L1091.5 686.4L1087.5 691.3L1083.6 696.2L1079.6 700.9L1075.7 705.7L1071.7 710.4L1067.8 715.1L1063.8 719.0L1059.9 722.5L1055.9 726.1L1052.0 729.6L1048.0 732.2L1044.1 733.7L1040.1 735.3L1036.2 736.9L1032.2 738.4L1028.3 737.5L1024.3 735.6L1020.4 733.6L1016.4 731.7L1012.5 726.8L1008.5 721.3L1004.6 706.7ZM1148.0 959.5L1151.1 960.7L1154.1 961.9L1157.2 963.1L1160.2 964.3L1163.2 965.5L1166.3 966.7L1166.6 966.8L1166.6 973.6L1166.3 973.5L1163.2 972.5L1160.2 971.6L1157.2 970.7L1154.1 969.8L1151.1 968.9L1148.0 968.0ZM1148.0 943.8L1151.1 945.6L1154.1 947.3L1157.2 949.0L1160.2 950.7L1163.2 952.5L1166.3 954.2L1166.6 954.4L1166.6 961.1L1166.3 961.0L1163.2 959.5L1160.2 958.1L1157.2 956.6L1154.1 955.2L1151.1 953.7L1148.0 952.3ZM1148.0 928.2L1151.1 930.4L1154.1 932.7L1157.2 934.9L1160.2 937.2L1163.2 939.4L1166.3 941.7L1166.6 941.9L1166.6 948.6L1166.3 948.4L1163.2 946.5L1160.2 944.5L1157.2 942.5L1154.1 940.6L1151.1 938.6L1148.0 936.6ZM1148.0 912.5L1151.1 915.3L1154.1 918.1L1157.2 920.8L1160.2 923.6L1163.2 926.4L1166.3 929.2L1166.6 929.5L1166.6 936.2L1166.3 935.9L1163.2 933.4L1160.2 930.9L1157.2 928.4L1154.1 926.0L1151.1 923.5L1148.0 921.0ZM1148.0 897.4L1151.1 900.7L1154.1 904.0L1157.2 907.2L1160.2 910.5L1163.2 913.8L1166.3 917.1L1166.6 917.4L1166.6 923.3L1166.3 923.0L1163.2 919.9L1160.2 916.9L1157.2 913.9L1154.1 910.8L1151.1 907.8L1148.0 904.7ZM1148.0 881.7L1151.1 885.5L1154.1 889.3L1157.2 893.1L1160.2 897.0L1163.2 900.8L1166.3 904.6L1166.6 905.0L1166.6 910.8L1166.3 910.5L1163.2 906.9L1160.2 903.3L1157.2 899.8L1154.1 896.2L1151.1 892.6L1148.0 889.1ZM1148.0 866.0L1151.1 870.4L1154.1 874.7L1157.2 879.1L1160.2 883.4L1163.2 887.7L1166.3 892.1L1166.6 892.5L1166.6 898.4L1166.3 898.0L1163.2 893.9L1160.2 889.8L1157.2 885.7L1154.1 881.6L1151.1 877.5L1148.0 873.4ZM1148.0 850.3L1151.1 855.2L1154.1 860.1L1157.2 865.0L1160.2 869.8L1163.2 874.7L1166.3 879.6L1166.6 880.1L1166.6 885.9L1166.3 885.5L1163.2 880.8L1160.2 876.2L1157.2 871.6L1154.1 867.0L1151.1 862.3L1148.0 857.7ZM1148.0 834.7L1151.1 840.1L1154.1 845.5L1157.2 850.9L1160.2 856.3L1163.2 861.7L1166.3 867.1L1166.6 867.6L1166.6 873.5L1166.3 873.0L1163.2 867.8L1160.2 862.7L1157.2 857.5L1154.1 852.3L1151.1 847.2L1148.0 842.0ZM1148.0 819.0L1151.1 824.9L1154.1 830.9L1157.2 836.8L1160.2 842.7L1163.2 848.6L1166.3 854.6L1166.6 855.2L1166.6 861.0L1166.3 860.4L1163.2 854.8L1160.2 849.1L1157.2 843.4L1154.1 837.7L1151.1 832.0L1148.0 826.4ZM1169.3 963.0L1172.7 963.9L1176.0 964.8L1179.4 965.7L1182.7 966.5L1186.0 967.4L1189.4 968.3L1189.8 968.4L1189.8 974.8L1189.4 974.7L1186.0 974.0L1182.7 973.3L1179.4 972.7L1176.0 972.0L1172.7 971.3L1169.3 970.6ZM1169.3 948.9L1172.7 950.1L1176.0 951.4L1179.4 952.7L1182.7 954.0L1186.0 955.2L1189.4 956.5L1189.8 956.7L1189.8 963.0L1189.4 962.9L1186.0 961.8L1182.7 960.7L1179.4 959.7L1176.0 958.6L1172.7 957.6L1169.3 956.5ZM1169.3 934.7L1172.7 936.4L1176.0 938.1L1179.4 939.7L1182.7 941.4L1186.0 943.0L1189.4 944.7L1189.8 944.9L1189.8 951.3L1189.4 951.1L1186.0 949.6L1182.7 948.2L1179.4 946.7L1176.0 945.3L1172.7 943.8L1169.3 942.4ZM1169.3 920.6L1172.7 922.7L1176.0 924.7L1179.4 926.7L1182.7 928.8L1186.0 930.8L1189.4 932.9L1189.8 933.1L1189.8 939.5L1189.4 939.2L1186.0 937.4L1182.7 935.6L1179.4 933.7L1176.0 931.9L1172.7 930.1L1169.3 928.2ZM1169.3 907.0L1172.7 909.4L1176.0 911.8L1179.4 914.2L1182.7 916.6L1186.0 919.1L1189.4 921.5L1189.8 921.8L1189.8 927.3L1189.4 927.0L1186.0 924.8L1182.7 922.6L1179.4 920.3L1176.0 918.1L1172.7 915.8L1169.3 913.6ZM1169.3 892.8L1172.7 895.6L1176.0 898.4L1179.4 901.2L1182.7 904.1L1186.0 906.9L1189.4 909.7L1189.8 910.0L1189.8 915.6L1189.4 915.2L1186.0 912.6L1182.7 910.0L1179.4 907.3L1176.0 904.7L1172.7 902.1L1169.3 899.5ZM1169.3 878.7L1172.7 881.9L1176.0 885.1L1179.4 888.3L1182.7 891.5L1186.0 894.7L1189.4 897.9L1189.8 898.3L1189.8 903.8L1189.4 903.4L1186.0 900.4L1182.7 897.4L1179.4 894.4L1176.0 891.4L1172.7 888.4L1169.3 885.3ZM1169.3 864.6L1172.7 868.1L1176.0 871.7L1179.4 875.3L1182.7 878.9L1186.0 882.5L1189.4 886.0L1189.8 886.5L1189.8 892.1L1189.4 891.6L1186.0 888.2L1182.7 884.8L1179.4 881.4L1176.0 878.0L1172.7 874.6L1169.3 871.2ZM1169.3 850.4L1172.7 854.4L1176.0 858.4L1179.4 862.3L1182.7 866.3L1186.0 870.3L1189.4 874.2L1189.8 874.8L1189.8 880.3L1189.4 879.8L1186.0 876.0L1182.7 872.2L1179.4 868.4L1176.0 864.6L1172.7 860.9L1169.3 857.1ZM1169.3 836.3L1172.7 840.6L1176.0 845.0L1179.4 849.4L1182.7 853.7L1186.0 858.1L1189.4 862.4L1189.8 863.0L1189.8 868.5L1189.4 868.0L1186.0 863.8L1182.7 859.6L1179.4 855.5L1176.0 851.3L1172.7 847.1L1169.3 842.9ZM1192.9 974.9L1196.8 975.2L1200.8 975.5L1204.7 975.8L1208.7 976.1L1212.6 976.4L1216.6 976.6L1220.5 976.9L1224.5 977.2L1228.4 977.5L1232.4 977.8L1232.4 981.9L1228.4 981.7L1224.5 981.5L1220.5 981.3L1216.6 981.0L1212.6 980.8L1208.7 980.6L1204.7 980.4L1200.8 980.1L1196.8 979.9L1192.9 979.7ZM1192.9 966.0L1196.8 966.4L1200.8 966.8L1204.7 967.3L1208.7 967.7L1212.6 968.1L1216.6 968.5L1220.5 968.9L1224.5 969.4L1228.4 969.8L1232.4 970.2L1232.4 974.3L1228.4 974.0L1224.5 973.6L1220.5 973.3L1216.6 972.9L1212.6 972.6L1208.7 972.2L1204.7 971.9L1200.8 971.5L1196.8 971.2L1192.9 970.8ZM1192.9 957.1L1196.8 957.6L1200.8 958.2L1204.7 958.7L1208.7 959.3L1212.6 959.8L1216.6 960.4L1220.5 960.9L1224.5 961.5L1228.4 962.0L1232.4 962.6L1232.4 966.7L1228.4 966.2L1224.5 965.7L1220.5 965.3L1216.6 964.8L1212.6 964.3L1208.7 963.8L1204.7 963.3L1200.8 962.9L1196.8 962.4L1192.9 961.9ZM1192.9 948.2L1196.8 948.9L1200.8 949.5L1204.7 950.2L1208.7 950.9L1212.6 951.6L1216.6 952.3L1220.5 952.9L1224.5 953.6L1228.4 954.3L1232.4 955.0L1232.4 959.1L1228.4 958.5L1224.5 957.9L1220.5 957.3L1216.6 956.7L1212.6 956.0L1208.7 955.4L1204.7 954.8L1200.8 954.2L1196.8 953.6L1192.9 953.0ZM1192.9 939.3L1196.8 940.1L1200.8 940.9L1204.7 941.7L1208.7 942.5L1212.6 943.3L1216.6 944.1L1220.5 944.9L1224.5 945.8L1228.4 946.6L1232.4 947.4L1232.4 951.5L1228.4 950.7L1224.5 950.0L1220.5 949.3L1216.6 948.5L1212.6 947.8L1208.7 947.0L1204.7 946.3L1200.8 945.6L1196.8 944.8L1192.9 944.1ZM1192.9 930.4L1196.8 931.3L1200.8 932.3L1204.7 933.2L1208.7 934.1L1212.6 935.1L1216.6 936.0L1220.5 936.9L1224.5 937.9L1228.4 938.8L1232.4 939.8L1232.4 943.9L1228.4 943.0L1224.5 942.1L1220.5 941.3L1216.6 940.4L1212.6 939.5L1208.7 938.7L1204.7 937.8L1200.8 936.9L1196.8 936.1L1192.9 935.2ZM1192.9 921.5L1196.8 922.6L1200.8 923.6L1204.7 924.7L1208.7 925.7L1212.6 926.8L1216.6 927.9L1220.5 928.9L1224.5 930.0L1228.4 931.1L1232.4 932.1L1232.4 936.2L1228.4 935.3L1224.5 934.3L1220.5 933.3L1216.6 932.3L1212.6 931.3L1208.7 930.3L1204.7 929.3L1200.8 928.3L1196.8 927.3L1192.9 926.3ZM1192.9 912.9L1196.8 914.1L1200.8 915.3L1204.7 916.5L1208.7 917.7L1212.6 918.8L1216.6 920.0L1220.5 921.2L1224.5 922.4L1228.4 923.6L1232.4 924.8L1232.4 928.4L1228.4 927.2L1224.5 926.1L1220.5 925.0L1216.6 923.9L1212.6 922.7L1208.7 921.6L1204.7 920.5L1200.8 919.3L1196.8 918.2L1192.9 917.1ZM1192.9 904.0L1196.8 905.3L1200.8 906.6L1204.7 908.0L1208.7 909.3L1212.6 910.6L1216.6 911.9L1220.5 913.2L1224.5 914.5L1228.4 915.9L1232.4 917.2L1232.4 920.8L1228.4 919.5L1224.5 918.2L1220.5 917.0L1216.6 915.7L1212.6 914.5L1208.7 913.2L1204.7 912.0L1200.8 910.7L1196.8 909.4L1192.9 908.2ZM1192.9 895.1L1196.8 896.5L1200.8 898.0L1204.7 899.4L1208.7 900.9L1212.6 902.3L1216.6 903.8L1220.5 905.2L1224.5 906.7L1228.4 908.1L1232.4 909.6L1232.4 913.1L1228.4 911.8L1224.5 910.4L1220.5 909.0L1216.6 907.6L1212.6 906.2L1208.7 904.8L1204.7 903.4L1200.8 902.1L1196.8 900.7L1192.9 899.3ZM1192.9 886.2L1196.8 887.8L1200.8 889.3L1204.7 890.9L1208.7 892.5L1212.6 894.1L1216.6 895.7L1220.5 897.2L1224.5 898.8L1228.4 900.4L1232.4 902.0L1232.4 905.5L1228.4 904.0L1224.5 902.5L1220.5 901.0L1216.6 899.5L1212.6 898.0L1208.7 896.4L1204.7 894.9L1200.8 893.4L1196.8 891.9L1192.9 890.4ZM1192.9 877.3L1196.8 879.0L1200.8 880.7L1204.7 882.4L1208.7 884.1L1212.6 885.8L1216.6 887.5L1220.5 889.2L1224.5 890.9L1228.4 892.6L1232.4 894.3L1232.4 897.9L1228.4 896.3L1224.5 894.6L1220.5 893.0L1216.6 891.3L1212.6 889.7L1208.7 888.1L1204.7 886.4L1200.8 884.8L1196.8 883.1L1192.9 881.5ZM1192.9 868.4L1196.8 870.2L1200.8 872.1L1204.7 873.9L1208.7 875.7L1212.6 877.6L1216.6 879.4L1220.5 881.2L1224.5 883.1L1228.4 884.9L1232.4 886.7L1232.4 890.3L1228.4 888.5L1224.5 886.8L1220.5 885.0L1216.6 883.2L1212.6 881.4L1208.7 879.7L1204.7 877.9L1200.8 876.1L1196.8 874.4L1192.9 872.6ZM1192.9 859.5L1196.8 861.5L1200.8 863.4L1204.7 865.4L1208.7 867.3L1212.6 869.3L1216.6 871.3L1220.5 873.2L1224.5 875.2L1228.4 877.2L1232.4 879.1L1232.4 882.7L1228.4 880.8L1224.5 878.9L1220.5 877.0L1216.6 875.1L1212.6 873.2L1208.7 871.3L1204.7 869.4L1200.8 867.5L1196.8 865.6L1192.9 863.7ZM1192.9 850.6L1196.8 852.7L1200.8 854.8L1204.7 856.9L1208.7 859.0L1212.6 861.0L1216.6 863.1L1220.5 865.2L1224.5 867.3L1228.4 869.4L1232.4 871.5L1232.4 875.1L1228.4 873.0L1224.5 871.0L1220.5 869.0L1216.6 867.0L1212.6 864.9L1208.7 862.9L1204.7 860.9L1200.8 858.8L1196.8 856.8L1192.9 854.8ZM1192.9 841.7L1196.8 843.9L1200.8 846.1L1204.7 848.4L1208.7 850.6L1212.6 852.8L1216.6 855.0L1220.5 857.2L1224.5 859.4L1228.4 861.7L1232.4 863.9L1232.4 867.5L1228.4 865.3L1224.5 863.1L1220.5 861.0L1216.6 858.8L1212.6 856.7L1208.7 854.5L1204.7 852.4L1200.8 850.2L1196.8 848.0L1192.9 845.9ZM1192.9 832.8L1196.8 835.1L1200.8 837.5L1204.7 839.8L1208.7 842.2L1212.6 844.5L1216.6 846.9L1220.5 849.2L1224.5 851.6L1228.4 853.9L1232.4 856.3L1232.4 859.9L1228.4 857.6L1224.5 855.3L1220.5 853.0L1216.6 850.7L1212.6 848.4L1208.7 846.1L1204.7 843.8L1200.8 841.6L1196.8 839.3L1192.9 837.0ZM1192.9 823.9L1196.8 826.4L1200.8 828.8L1204.7 831.3L1208.7 833.8L1212.6 836.3L1216.6 838.8L1220.5 841.2L1224.5 843.7L1228.4 846.2L1232.4 848.7L1232.4 852.2L1228.4 849.8L1224.5 847.4L1220.5 845.0L1216.6 842.6L1212.6 840.2L1208.7 837.7L1204.7 835.3L1200.8 832.9L1196.8 830.5L1192.9 828.1ZM1192.9 815.0L1196.8 817.6L1200.8 820.2L1204.7 822.8L1208.7 825.4L1212.6 828.0L1216.6 830.6L1220.5 833.2L1224.5 835.8L1228.4 838.4L1232.4 841.0L1232.4 844.6L1228.4 842.1L1224.5 839.5L1220.5 837.0L1216.6 834.4L1212.6 831.9L1208.7 829.4L1204.7 826.8L1200.8 824.3L1196.8 821.7L1192.9 819.2ZM1192.9 806.1L1196.8 808.8L1200.8 811.6L1204.7 814.3L1208.7 817.0L1212.6 819.8L1216.6 822.5L1220.5 825.2L1224.5 828.0L1228.4 830.7L1232.4 833.4L1232.4 837.0L1228.4 834.3L1224.5 831.7L1220.5 829.0L1216.6 826.3L1212.6 823.6L1208.7 821.0L1204.7 818.3L1200.8 815.6L1196.8 812.9L1192.9 810.3ZM1192.9 797.2L1196.8 800.1L1200.8 802.9L1204.7 805.8L1208.7 808.6L1212.6 811.5L1216.6 814.4L1220.5 817.2L1224.5 820.1L1228.4 823.0L1232.4 825.8L1232.4 829.4L1228.4 826.6L1224.5 823.8L1220.5 821.0L1216.6 818.2L1212.6 815.4L1208.7 812.6L1204.7 809.8L1200.8 807.0L1196.8 804.2L1192.9 801.4ZM1192.9 788.3L1196.8 791.3L1200.8 794.3L1204.7 797.3L1208.7 800.3L1212.6 803.2L1216.6 806.2L1220.5 809.2L1224.5 812.2L1228.4 815.2L1232.4 818.2L1232.4 821.8L1228.4 818.9L1224.5 815.9L1220.5 813.0L1216.6 810.1L1212.6 807.1L1208.7 804.2L1204.7 801.3L1200.8 798.3L1196.8 795.4L1192.9 792.5ZM1192.9 779.4L1196.8 782.5L1200.8 785.6L1204.7 788.7L1208.7 791.9L1212.6 795.0L1216.6 798.1L1220.5 801.2L1224.5 804.4L1228.4 807.5L1232.4 810.6L1232.4 814.2L1228.4 811.1L1224.5 808.1L1220.5 805.0L1216.6 801.9L1212.6 798.9L1208.7 795.8L1204.7 792.8L1200.8 789.7L1196.8 786.6L1192.9 783.6ZM1192.9 770.5L1196.8 773.7L1200.8 777.0L1204.7 780.2L1208.7 783.5L1212.6 786.7L1216.6 790.0L1220.5 793.2L1224.5 796.5L1228.4 799.7L1232.4 803.0L1232.4 806.6L1228.4 803.4L1224.5 800.2L1220.5 797.0L1216.6 793.8L1212.6 790.6L1208.7 787.4L1204.7 784.2L1200.8 781.0L1196.8 777.9L1192.9 774.7ZM1147.3 976.9L1153.4 977.8L1159.4 978.7L1165.5 979.6L1171.6 978.6L1177.7 979.2L1183.8 979.9L1189.8 980.5L1195.9 982.1L1202.0 982.3L1208.1 982.5L1214.2 982.7L1220.2 982.9L1226.3 983.1L1232.4 983.3L1232.4 989.5L1226.3 989.3L1220.2 989.1L1214.2 988.8L1208.1 988.6L1202.0 988.4L1195.9 988.2L1189.8 986.7L1183.8 986.0L1177.7 985.4L1171.6 984.7L1165.5 985.8L1159.4 984.9L1153.4 984.0L1147.3 983.1Z"/></g>
<g mask="url(#sm2)"><path filter="url(#b05)" fill="#fff" d="M1148.5 707.7L1166.6 765.6v7.6L1148.5 715.3ZM1148.5 721.2L1166.6 779.1v7.6L1148.5 728.8ZM1148.5 734.7L1166.6 792.6v7.6L1148.5 742.3ZM1148.5 748.2L1166.6 806.1v7.6L1148.5 755.8ZM1148.5 761.7L1166.6 819.6v7.6L1148.5 769.3ZM1148.5 775.2L1166.6 833.1v7.6L1148.5 782.8ZM1148.5 788.7L1166.6 846.6v7.6L1148.5 796.3ZM1148.5 802.2L1166.6 860.1v7.6L1148.5 809.8ZM1148.5 815.7L1166.6 873.6v7.6L1148.5 823.3ZM1148.5 829.2L1166.6 887.1v7.6L1148.5 836.8ZM1148.5 842.7L1166.6 900.6v7.6L1148.5 850.3ZM1148.5 856.2L1166.6 914.1v7.6L1148.5 863.8ZM1148.5 869.7L1166.6 927.6v7.6L1148.5 877.3ZM1169.6 694.2L1189.8 748.8v7.2L1169.6 701.4ZM1169.6 706.7L1189.8 761.3v7.2L1169.6 713.9ZM1169.6 719.2L1189.8 773.8v7.2L1169.6 726.4ZM1169.6 731.7L1189.8 786.3v7.2L1169.6 738.9ZM1169.6 744.2L1189.8 798.8v7.2L1169.6 751.4ZM1169.6 756.7L1189.8 811.3v7.2L1169.6 763.9ZM1169.6 769.2L1189.8 823.8v7.2L1169.6 776.4ZM1169.6 781.7L1189.8 836.3v7.2L1169.6 788.9ZM1169.6 794.2L1189.8 848.8v7.2L1169.6 801.4ZM1169.6 806.7L1189.8 861.3v7.2L1169.6 813.9ZM1169.6 819.2L1189.8 873.8v7.2L1169.6 826.4ZM1169.6 831.7L1189.8 886.3v7.2L1169.6 838.9ZM1169.6 844.2L1189.8 898.8v7.2L1169.6 851.4ZM1169.6 856.7L1189.8 911.3v7.2L1169.6 863.9ZM1169.6 869.2L1189.8 923.8v7.2L1169.6 876.4Z"/></g>
</g></g>
<rect x="476.4" y="716.1" width="379.8" height="278.7" fill="none" stroke="#000" stroke-width="1.3"/>
<rect x="932.2" y="716.1" width="380.0" height="278.7" fill="none" stroke="#000" stroke-width="1.3"/>
<path fill="none" stroke="#000" stroke-width="0.7" d="M552.4 994.8v-5.2M552.4 716.1v5.2M628.3 994.8v-5.2M628.3 716.1v5.2M704.3 994.8v-5.2M704.3 716.1v5.2M780.2 994.8v-5.2M780.2 716.1v5.2M476.4 964.0h5.2M856.2 964.0h-5.2M476.4 932.9h5.2M856.2 932.9h-5.2M476.4 901.8h5.2M856.2 901.8h-5.2M476.4 870.7h5.2M856.2 870.7h-5.2M476.4 839.6h5.2M856.2 839.6h-5.2M476.4 808.5h5.2M856.2 808.5h-5.2M476.4 777.4h5.2M856.2 777.4h-5.2M476.4 746.3h5.2M856.2 746.3h-5.2M1008.2 994.8v-5.2M1008.2 716.1v5.2M1084.2 994.8v-5.2M1084.2 716.1v5.2M1160.2 994.8v-5.2M1160.2 716.1v5.2M1236.2 994.8v-5.2M1236.2 716.1v5.2M932.2 939.1h5.2M1312.2 939.1h-5.2M932.2 883.1h5.2M1312.2 883.1h-5.2M932.2 827.2h5.2M1312.2 827.2h-5.2M932.2 771.2h5.2M1312.2 771.2h-5.2"/>
<g font-size="13.2" letter-spacing="-0.25"><text transform="translate(475.8 1009.7) scale(0.92 1)" text-anchor="middle">0</text><text transform="translate(551.8 1009.7) scale(0.92 1)" text-anchor="middle">10000</text><text transform="translate(627.7 1009.7) scale(0.92 1)" text-anchor="middle">20000</text><text transform="translate(703.7 1009.7) scale(0.92 1)" text-anchor="middle">30000</text><text transform="translate(779.6 1009.7) scale(0.92 1)" text-anchor="middle">40000</text><text transform="translate(855.6 1009.7) scale(0.92 1)" text-anchor="middle">50000</text><text transform="translate(469.6 999.3) scale(0.92 1)" text-anchor="end">−10000</text><text transform="translate(469.6 968.2) scale(0.92 1)" text-anchor="end">−8000</text><text transform="translate(469.6 937.1) scale(0.92 1)" text-anchor="end">−6000</text><text transform="translate(469.6 906.0) scale(0.92 1)" text-anchor="end">−4000</text><text transform="translate(469.6 874.9) scale(0.92 1)" text-anchor="end">−2000</text><text transform="translate(469.6 843.8) scale(0.92 1)" text-anchor="end">0</text><text transform="translate(469.6 812.7) scale(0.92 1)" text-anchor="end">2000</text><text transform="translate(469.6 781.6) scale(0.92 1)" text-anchor="end">4000</text><text transform="translate(469.6 750.5) scale(0.92 1)" text-anchor="end">6000</text><text transform="translate(469.6 719.4) scale(0.92 1)" text-anchor="end">8000</text><text transform="translate(931.6 1009.7) scale(0.92 1)" text-anchor="middle">0</text><text transform="translate(1007.6 1009.7) scale(0.92 1)" text-anchor="middle">5000</text><text transform="translate(1083.6 1009.7) scale(0.92 1)" text-anchor="middle">10000</text><text transform="translate(1159.6 1009.7) scale(0.92 1)" text-anchor="middle">15000</text><text transform="translate(1235.6 1009.7) scale(0.92 1)" text-anchor="middle">20000</text><text transform="translate(1311.6 1009.7) scale(0.92 1)" text-anchor="middle">25000</text><text transform="translate(925.6 999.3) scale(0.92 1)" text-anchor="end">0.0</text><text transform="translate(925.6 943.3) scale(0.92 1)" text-anchor="end">0.2</text><text transform="translate(925.6 887.3) scale(0.92 1)" text-anchor="end">0.4</text><text transform="translate(925.6 831.4) scale(0.92 1)" text-anchor="end">0.6</text><text transform="translate(925.6 775.4) scale(0.92 1)" text-anchor="end">0.8</text><text transform="translate(925.6 719.4) scale(0.92 1)" text-anchor="end">1.0</text></g>
<text x="666.3" y="708.8" font-size="15.2" text-anchor="middle">Raw audio signal</text>
<text x="1122.2" y="708.8" font-size="15.2" text-anchor="middle">Spectrogram</text>
</svg>

<svg class="abs" style="left:1800px;top:1025px;z-index:7" width="120" height="55" viewBox="1800 1025 120 55">
<defs>
<linearGradient id="w1" x1="0" y1="0" x2="0" y2="1"><stop offset="0" stop-color="#10a8ee"/><stop offset="1" stop-color="#1a84d6"/></linearGradient>
<linearGradient id="w2" x1="0" y1="0" x2="1" y2="0"><stop offset="0" stop-color="#22aef0"/><stop offset="1" stop-color="#1a74c8"/></linearGradient>
<linearGradient id="w3" x1="0" y1="0" x2="1" y2="0"><stop offset="0" stop-color="#22b2f2"/><stop offset="0.6" stop-color="#1878c8"/><stop offset="1" stop-color="#1c4a92"/></linearGradient>
</defs>
<path fill="url(#w1)" d="M1836.5 1032.6A20.5 20.5 0 0 0 1835.3 1073.4A21.6 21.6 0 0 1 1836.5 1032.6Z"/>
<path fill="none" stroke="url(#w2)" stroke-width="2.3" stroke-linecap="round" d="M1823.3 1058A17.3 17.3 0 0 1 1851.1 1040.2"/>
<path fill="none" stroke="url(#w3)" stroke-width="1.9" stroke-linecap="round" d="M1828.3 1047A13 13 0 0 1 1853.4 1052.6"/>
<text x="1857.5" y="1052.4" font-family="Liberation Sans, Noto Sans CJK SC, sans-serif" font-size="15.4" fill="#5b5b68">运维网</text>
<text x="1839.8" y="1068.8" font-family="Liberation Sans, sans-serif" font-weight="bold" font-size="15.4" fill="#0b78d6">iyunv.com</text>
</svg>

</body>
</html>
